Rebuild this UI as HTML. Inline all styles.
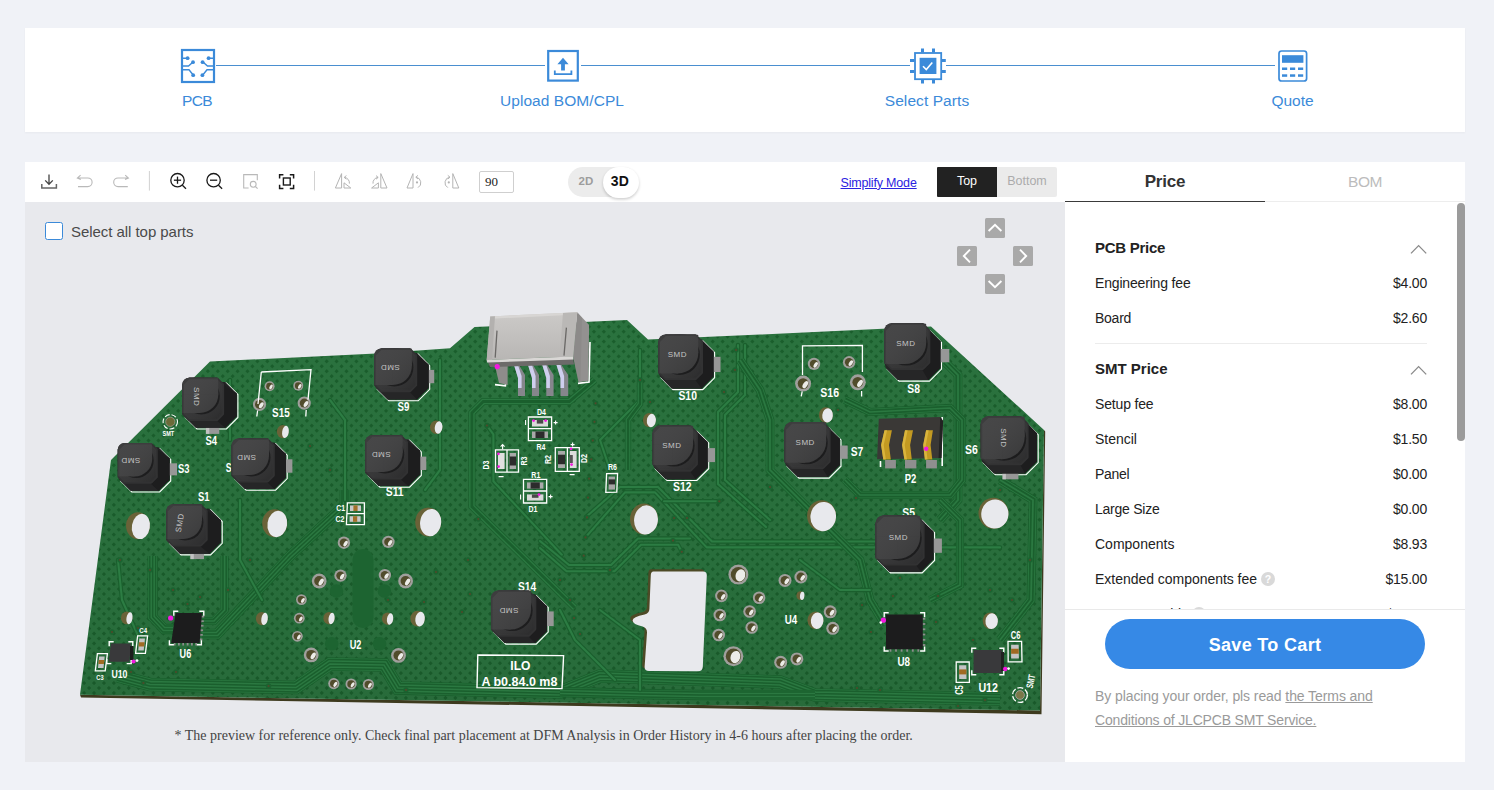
<!DOCTYPE html>
<html lang="en"><head><meta charset="utf-8"><title>SMT Assembly - Select Parts</title>
<style>
*{box-sizing:border-box;margin:0;padding:0}
html,body{width:1494px;height:790px;overflow:hidden}
body{background:#f0f2f7;font-family:"Liberation Sans",sans-serif;position:relative;color:#222}
.abs{position:absolute}
#steps{position:absolute;left:25px;top:28px;width:1440px;height:104px;background:#fff;box-shadow:0 1px 2px rgba(0,0,0,.04)}
.sline{position:absolute;height:2px;background:#4a8fd0;top:64px}
.slabel{position:absolute;top:91.5px;width:300px;text-align:center;font-size:15.5px;line-height:18px;color:#3b8ad9;white-space:nowrap}
#toolbar{position:absolute;left:25px;top:162px;width:1040px;height:40px;background:#fff}
#viewer{position:absolute;left:25px;top:202px;width:1040px;height:560px;background:#e8e9ed;overflow:hidden}
#panel{position:absolute;left:1065px;top:162px;width:400px;height:600px;background:#fff;overflow:hidden}
.tab{position:absolute;top:0;height:40px;width:200px;text-align:center;line-height:40px;white-space:nowrap}
.row{position:absolute;left:30px;width:332px;height:20px;line-height:20px;font-size:14px;color:#222;white-space:nowrap}
.row b{font-size:15px;color:#222}
.row .p{position:absolute;right:0;top:0;letter-spacing:-0.2px}
.chev{position:absolute;right:0;top:5px}
</style></head>
<body>
<div id="steps"></div>
<div class="sline" style="left:216px;width:329px;top:64.5px;height:1.5px"></div>
<div class="sline" style="left:581px;width:329px;top:64.5px;height:1.5px"></div>
<div class="sline" style="left:946px;width:329px;top:64.5px;height:1.5px"></div>
<svg class="abs" style="left:0;top:0" width="1494" height="140" viewBox="0 0 1494 140"><rect x="182" y="50" width="32" height="32" fill="#fff" stroke="#3b8ad9" stroke-width="2.2"/><g stroke="#3b8ad9" stroke-width="1.4" fill="none"><path d="M183 58.3h4.5M213 58.3h-4.5M183 66h5.5l4-3.6M213 66h-5.5l-4-3.6M183 69.8h6l4 5M213 69.8h-6l-4 5"/></g><circle cx="187.6" cy="58.2" r="1.9" fill="#3b8ad9"/><circle cx="208.6" cy="58.2" r="1.9" fill="#3b8ad9"/><circle cx="193" cy="62.2" r="1.9" fill="#3b8ad9"/><circle cx="202.6" cy="62.2" r="1.9" fill="#3b8ad9"/><circle cx="193.2" cy="75.2" r="1.9" fill="#3b8ad9"/><circle cx="202.4" cy="75.2" r="1.9" fill="#3b8ad9"/><rect x="548.2" y="51" width="29.6" height="29.6" fill="#fff" stroke="#3b8ad9" stroke-width="2.2"/><path d="M563 57.8l5.6 6.4h-3.7v6.4h-3.8v-6.4h-3.7z" fill="#3b8ad9"/><path d="M554.8 70.5v3.6h16.6v-3.6" fill="none" stroke="#3b8ad9" stroke-width="1.8"/><rect x="915" y="53" width="26.2" height="26.2" fill="#fff" stroke="#3b8ad9" stroke-width="1.8"/><rect x="919.6" y="57.8" width="16.8" height="16.2" fill="#3b8ad9"/><path d="M923 66.2l3.3 3.4 6-7" fill="none" stroke="#fff" stroke-width="1.6"/><path d="M921 48.4h3v4h-3zM921 79.8h3v3.6h-3zM932 48.4h3v4h-3zM932 79.8h3v3.6h-3zM910 59h4.4v3h-4.4zM941.6 59h4.2v3h-4.2zM910 70h4.4v3h-4.4zM941.6 70h4.2v3h-4.2z" fill="#3b8ad9"/><rect x="1279" y="51" width="27.6" height="30" rx="2.6" fill="#fff" stroke="#3b8ad9" stroke-width="1.7"/><rect x="1282" y="55.2" width="21.4" height="7.6" fill="#3b8ad9"/><rect x="1282" y="67.5" width="5.2" height="2.5" fill="#3b8ad9"/><rect x="1290" y="67.5" width="5.2" height="2.5" fill="#3b8ad9"/><rect x="1298" y="67.5" width="5.2" height="2.5" fill="#3b8ad9"/><rect x="1282" y="74.3" width="5.2" height="2.5" fill="#3b8ad9"/><rect x="1290" y="74.3" width="5.2" height="2.5" fill="#3b8ad9"/><rect x="1298" y="74.3" width="5.2" height="2.5" fill="#3b8ad9"/></svg>
<div class="slabel" style="left:47px;letter-spacing:-0.7px">PCB</div>
<div class="slabel" style="left:412px;letter-spacing:0.05px">Upload BOM/CPL</div>
<div class="slabel" style="left:777px;letter-spacing:0.08px">Select Parts</div>
<div class="slabel" style="left:1142.5px;letter-spacing:-0.06px">Quote</div>
<div id="toolbar"></div>
<svg class="abs" style="left:0;top:162px" width="1065" height="40" viewBox="0 162 1065 40" fill="none"><path d="M49 174.6v9.6M45.2 180.4l3.8 3.9 3.8-3.9" stroke="#444" stroke-width="1.3"/><path d="M41.8 184v4h14.6v-4" stroke="#666" stroke-width="1.5"/><path d="M80.6 175.2l-3.2 2.8 3.4 1.4M77.6 178h10.2a4.3 4.3 0 0 1 0 8.6h-9.8" stroke="#b9b9b9" stroke-width="1.1"/><path d="M125.2 175.2l3.2 2.8-3.4 1.4M128.2 178h-10.2a4.3 4.3 0 0 0 0 8.6h9.8" stroke="#b9b9b9" stroke-width="1.1"/><path d="M149.4 171v19.6M314.5 171v19.6" stroke="#d2d2d2" stroke-width="1"/><circle cx="177.5" cy="180.2" r="6.7" stroke="#1a1a1a" stroke-width="1.3"/><path d="M182.4 185.3l3.6 3.4" stroke="#1a1a1a" stroke-width="1.3"/><path d="M173.9 180.2h7.2" stroke="#1a1a1a" stroke-width="1.3"/><path d="M177.5 176.6v7.2" stroke="#1a1a1a" stroke-width="1.3"/><circle cx="213.6" cy="180.2" r="6.7" stroke="#1a1a1a" stroke-width="1.3"/><path d="M218.5 185.3l3.6 3.4" stroke="#1a1a1a" stroke-width="1.3"/><path d="M210.0 180.2h7.2" stroke="#1a1a1a" stroke-width="1.3"/><path d="M248.6 188h-4.9v-13.4h13.6v5.6" stroke="#b9b9b9" stroke-width="1.1"/><circle cx="253.2" cy="184.3" r="2.9" stroke="#b9b9b9" stroke-width="1.1"/><path d="M255.4 186.5l2.2 2.2" stroke="#b9b9b9" stroke-width="1.1"/><path d="M279.6 178.4v-3.6h3.8M289.8 174.8h3.8v3.6M293.6 184.8v3.6h-3.8M283.4 188.4h-3.8v-3.6" stroke="#1a1a1a" stroke-width="1.5"/><rect x="283.4" y="178" width="6.8" height="7" stroke="#1a1a1a" stroke-width="1.4"/><path d="M341.6 173.6v14.4h-6.2zM344 188v-5.2l6.8 5.2z" stroke="#b4b4b4" stroke-width="1"/><path d="M349.4 183.6a5.6 5.6 0 0 0-5-6.2M346.4 175.6l-2.2 1.8 2.2 1.8" stroke="#b4b4b4" stroke-width="1"/><path d="M380.8 173.6v14.4h6.2zM378.4 188v-5.2l-6.8 5.2z" stroke="#b4b4b4" stroke-width="1"/><path d="M373 183.6a5.6 5.6 0 0 1 5-6.2M376 175.6l2.2 1.8-2.2 1.8" stroke="#b4b4b4" stroke-width="1"/><path d="M413 173.6v14.4h-6zM416 177.2a5.6 5.6 0 0 1 2 10.4M418 175.4l-2.2 1.8 2.2 1.8" stroke="#b4b4b4" stroke-width="1"/><circle cx="417" cy="182.4" r="1.1" fill="#b4b4b4"/><path d="M452.8 173.6v14.4h6zM449.8 177.2a5.6 5.6 0 0 0-2 10.4M447.8 175.4l2.2 1.8-2.2 1.8" stroke="#b4b4b4" stroke-width="1"/><circle cx="448.8" cy="182.4" r="1.1" fill="#b4b4b4"/></svg>
<div class="abs" style="left:479px;top:171px;width:35px;height:22px;border:1px solid #cfcfcf;border-radius:2px;background:#fff;font-family:'Liberation Serif',serif;font-size:13px;line-height:19px;padding-left:5px;color:#222">90</div>
<div class="abs" style="left:568px;top:167px;width:70px;height:30px;border-radius:15px;background:#ececec"></div>
<div class="abs" style="left:603px;top:166.5px;width:35.5px;height:31px;border-radius:15.5px;background:#fff;box-shadow:0 1.5px 3px rgba(0,0,0,.2)"></div>
<div class="abs" style="left:568px;top:174px;width:36px;text-align:center;font-size:11.5px;line-height:15px;font-weight:bold;color:#9d9d9d;letter-spacing:.2px">2D</div>
<div class="abs" style="left:602px;top:172.8px;width:36px;text-align:center;font-size:14px;line-height:17px;font-weight:bold;color:#111;letter-spacing:.4px">3D</div>
<div class="abs" style="left:840.5px;top:174.5px;font-size:12.5px;line-height:16px;color:#2a22e0;text-decoration:underline;white-space:nowrap;letter-spacing:-0.18px">Simplify Mode</div>
<div class="abs" style="left:937px;top:167.2px;width:60px;height:29.5px;background:#222;color:#fff;font-size:12.5px;line-height:29px;text-align:center;border-radius:1px 0 0 1px">Top</div>
<div class="abs" style="left:997px;top:167.2px;width:60px;height:29.5px;background:#ebebeb;color:#ababab;font-size:12.5px;line-height:29px;text-align:center;border-radius:0 2px 2px 0">Bottom</div>
<div id="viewer">
<svg class="abs" style="left:0;top:0" width="1040" height="560" viewBox="25 202 1040 560"><defs><pattern id="dots" width="7" height="7" patternUnits="userSpaceOnUse" patternTransform="rotate(45)"><rect width="7" height="7" fill="#2a723e"/><rect x="2" y="2" width="3" height="3" fill="#1a5e2c"/></pattern><linearGradient id="gtop" gradientUnits="objectBoundingBox" x1="0" y1="0" x2="1" y2="1"><stop offset="0" stop-color="#424243"/><stop offset=".7" stop-color="#3a3a3b"/><stop offset="1" stop-color="#323233"/></linearGradient><linearGradient id="gsh" x1="0" y1="0" x2="1" y2="1"><stop offset="0" stop-color="#fff" stop-opacity=".05"/><stop offset="1" stop-color="#000" stop-opacity=".12"/></linearGradient><linearGradient id="gconn" x1="0" y1="0" x2="0" y2="1"><stop offset="0" stop-color="#cccac8"/><stop offset="1" stop-color="#b8b6b4"/></linearGradient><linearGradient id="gboard" x1="0" y1="0" x2="0" y2="1"><stop offset="0" stop-color="#000" stop-opacity="0"/><stop offset="1" stop-color="#000" stop-opacity=".06"/></linearGradient></defs><polygon points="80,694.8 1040,710.5 1044,430 1045.2,431.5 1041.5,714.2 81,697.4" fill="#3d3a1e"/><polygon points="210,361.5 376,353.5 450,348.3 474.5,327 589,321.8 627,320 648,339.5 760,334.6 888,328.6 931,326.5 1044,430 1040,710.5 80,694.8 111,460" fill="url(#dots)"/><polygon points="210,361.5 376,353.5 450,348.3 474.5,327 589,321.8 627,320 648,339.5 760,334.6 888,328.6 931,326.5 1044,430 1040,710.5 80,694.8 111,460" fill="url(#gboard)"/><polyline points="118,676 150,684.5 296,687.5 330,664 384,665 398,688 560,692 600,676 780,682 815,695 1000,699" fill="none" stroke="#1a5f2d" stroke-width="13.5" stroke-linejoin="miter"/><polyline points="118,676 150,684.5 296,687.5 330,664 384,665 398,688 560,692 600,676 780,682 815,695 1000,699" fill="none" stroke="#2b7841" stroke-width="11.9" stroke-linejoin="miter"/><polyline points="118,676 150,684.5 296,687.5 330,664 384,665 398,688 560,692 600,676 780,682 815,695 1000,699" fill="none" stroke="#1a5f2d" stroke-width="10.4" stroke-linejoin="miter"/><polyline points="118,676 150,684.5 296,687.5 330,664 384,665 398,688 560,692 600,676 780,682 815,695 1000,699" fill="none" stroke="#2b7841" stroke-width="7.4" stroke-linejoin="miter"/><polyline points="118,676 150,684.5 296,687.5 330,664 384,665 398,688 560,692 600,676 780,682 815,695 1000,699" fill="none" stroke="#1a5f2d" stroke-width="4.5" stroke-linejoin="miter"/><polyline points="118,676 150,684.5 296,687.5 330,664 384,665 398,688 560,692 600,676 780,682 815,695 1000,699" fill="none" stroke="#2b7841" stroke-width="1.5" stroke-linejoin="miter"/><polyline points="560,692 640,694 700,695 815,695" fill="none" stroke="#1a5f2d" stroke-width="10.3" stroke-linejoin="miter"/><polyline points="560,692 640,694 700,695 815,695" fill="none" stroke="#2b7841" stroke-width="8.7" stroke-linejoin="miter"/><polyline points="560,692 640,694 700,695 815,695" fill="none" stroke="#1a5f2d" stroke-width="7.3" stroke-linejoin="miter"/><polyline points="560,692 640,694 700,695 815,695" fill="none" stroke="#2b7841" stroke-width="4.4" stroke-linejoin="miter"/><polyline points="560,692 640,694 700,695 815,695" fill="none" stroke="#1a5f2d" stroke-width="1.5" stroke-linejoin="miter"/><polyline points="152.7,556 152.7,617 164,629 173,629" fill="none" stroke="#1a5f2d" stroke-width="10.3" stroke-linejoin="miter"/><polyline points="152.7,556 152.7,617 164,629 173,629" fill="none" stroke="#2b7841" stroke-width="8.7" stroke-linejoin="miter"/><polyline points="152.7,556 152.7,617 164,629 173,629" fill="none" stroke="#1a5f2d" stroke-width="7.3" stroke-linejoin="miter"/><polyline points="152.7,556 152.7,617 164,629 173,629" fill="none" stroke="#2b7841" stroke-width="4.4" stroke-linejoin="miter"/><polyline points="152.7,556 152.7,617 164,629 173,629" fill="none" stroke="#1a5f2d" stroke-width="1.5" stroke-linejoin="miter"/><polyline points="224.6,556 224.6,610 214,621 202,621" fill="none" stroke="#1a5f2d" stroke-width="8.1" stroke-linejoin="miter"/><polyline points="224.6,556 224.6,610 214,621 202,621" fill="none" stroke="#2b7841" stroke-width="6.5" stroke-linejoin="miter"/><polyline points="224.6,556 224.6,610 214,621 202,621" fill="none" stroke="#1a5f2d" stroke-width="4.9" stroke-linejoin="miter"/><polyline points="224.6,556 224.6,610 214,621 202,621" fill="none" stroke="#2b7841" stroke-width="1.6" stroke-linejoin="miter"/><polyline points="202,634 217,634 290,556 345,505 345,490" fill="none" stroke="#1a5f2d" stroke-width="10.7" stroke-linejoin="miter"/><polyline points="202,634 217,634 290,556 345,505 345,490" fill="none" stroke="#2b7841" stroke-width="9.1" stroke-linejoin="miter"/><polyline points="202,634 217,634 290,556 345,505 345,490" fill="none" stroke="#1a5f2d" stroke-width="7.6" stroke-linejoin="miter"/><polyline points="202,634 217,634 290,556 345,505 345,490" fill="none" stroke="#2b7841" stroke-width="4.5" stroke-linejoin="miter"/><polyline points="202,634 217,634 290,556 345,505 345,490" fill="none" stroke="#1a5f2d" stroke-width="1.5" stroke-linejoin="miter"/><polyline points="594.7,380 569.4,401.5 483.3,401.5 471.9,412.9 471.9,506.6 541.5,575 575,608" fill="none" stroke="#1a5f2d" stroke-width="7.1" stroke-linejoin="miter"/><polyline points="594.7,380 569.4,401.5 483.3,401.5 471.9,412.9 471.9,506.6 541.5,575 575,608" fill="none" stroke="#2b7841" stroke-width="5.5" stroke-linejoin="miter"/><polyline points="594.7,380 569.4,401.5 483.3,401.5 471.9,412.9 471.9,506.6 541.5,575 575,608" fill="none" stroke="#1a5f2d" stroke-width="2.8" stroke-linejoin="miter"/><polyline points="487,425.6 493.4,434.4 493.4,481.3 561.8,554.7" fill="none" stroke="#1a5f2d" stroke-width="4.4" stroke-linejoin="round" stroke-linecap="round"/><polyline points="487,425.6 493.4,434.4 493.4,481.3 561.8,554.7" fill="none" stroke="#2c7c43" stroke-width="2.1" stroke-linejoin="round" stroke-linecap="round"/><polyline points="540,548 566.6,571.3 614.5,571.3 641,544.7 678,544.7 681.8,551.8" fill="none" stroke="#1a5f2d" stroke-width="4.4" stroke-linejoin="round" stroke-linecap="round"/><polyline points="540,548 566.6,571.3 614.5,571.3 641,544.7 678,544.7 681.8,551.8" fill="none" stroke="#2c7c43" stroke-width="2.1" stroke-linejoin="round" stroke-linecap="round"/><polyline points="540,541 569,565 611,565 638,538.5 690,538.5" fill="none" stroke="#1a5f2d" stroke-width="4.4" stroke-linejoin="round" stroke-linecap="round"/><polyline points="540,541 569,565 611,565 638,538.5 690,538.5" fill="none" stroke="#2c7c43" stroke-width="2.1" stroke-linejoin="round" stroke-linecap="round"/><polyline points="586,536.7 625,492.4 655,492.4 706.7,547.4 1000,547.4" fill="none" stroke="#1a5f2d" stroke-width="4.4" stroke-linejoin="round" stroke-linecap="round"/><polyline points="586,536.7 625,492.4 655,492.4 706.7,547.4 1000,547.4" fill="none" stroke="#2c7c43" stroke-width="2.1" stroke-linejoin="round" stroke-linecap="round"/><polyline points="586,517 620,487 658,487 712,541.5 880,541.5" fill="none" stroke="#1a5f2d" stroke-width="4.4" stroke-linejoin="round" stroke-linecap="round"/><polyline points="586,517 620,487 658,487 712,541.5 880,541.5" fill="none" stroke="#2c7c43" stroke-width="2.1" stroke-linejoin="round" stroke-linecap="round"/><polyline points="719,501.3 664,501.3" fill="none" stroke="#1a5f2d" stroke-width="4.4" stroke-linejoin="round" stroke-linecap="round"/><polyline points="719,501.3 664,501.3" fill="none" stroke="#2c7c43" stroke-width="2.1" stroke-linejoin="round" stroke-linecap="round"/><polyline points="610,470 600,440 640,400 640,350" fill="none" stroke="#1a5f2d" stroke-width="4.4" stroke-linejoin="round" stroke-linecap="round"/><polyline points="610,470 600,440 640,400 640,350" fill="none" stroke="#2c7c43" stroke-width="2.1" stroke-linejoin="round" stroke-linecap="round"/><polyline points="745,345 745,395 725,415 725,480 770,520" fill="none" stroke="#1a5f2d" stroke-width="4.4" stroke-linejoin="round" stroke-linecap="round"/><polyline points="745,345 745,395 725,415 725,480 770,520" fill="none" stroke="#2c7c43" stroke-width="2.1" stroke-linejoin="round" stroke-linecap="round"/><polyline points="738,345 738,392 718,412 718,484 766,527" fill="none" stroke="#1a5f2d" stroke-width="4.4" stroke-linejoin="round" stroke-linecap="round"/><polyline points="738,345 738,392 718,412 718,484 766,527" fill="none" stroke="#2c7c43" stroke-width="2.1" stroke-linejoin="round" stroke-linecap="round"/><polyline points="945,362 958,375 958,500 940,520" fill="none" stroke="#1a5f2d" stroke-width="8.7" stroke-linejoin="miter"/><polyline points="945,362 958,375 958,500 940,520" fill="none" stroke="#2b7841" stroke-width="7.1" stroke-linejoin="miter"/><polyline points="945,362 958,375 958,500 940,520" fill="none" stroke="#1a5f2d" stroke-width="5.3" stroke-linejoin="miter"/><polyline points="945,362 958,375 958,500 940,520" fill="none" stroke="#2b7841" stroke-width="1.8" stroke-linejoin="miter"/><polyline points="1000,480 1033,500 1031,600 1000,640" fill="none" stroke="#1a5f2d" stroke-width="8.7" stroke-linejoin="miter"/><polyline points="1000,480 1033,500 1031,600 1000,640" fill="none" stroke="#2b7841" stroke-width="7.1" stroke-linejoin="miter"/><polyline points="1000,480 1033,500 1031,600 1000,640" fill="none" stroke="#1a5f2d" stroke-width="5.3" stroke-linejoin="miter"/><polyline points="1000,480 1033,500 1031,600 1000,640" fill="none" stroke="#2b7841" stroke-width="1.8" stroke-linejoin="miter"/><polyline points="845,400 870,412 950,408 962,420 962,480 950,495 860,495 845,480" fill="none" stroke="#1a5f2d" stroke-width="8.1" stroke-linejoin="miter"/><polyline points="845,400 870,412 950,408 962,420 962,480 950,495 860,495 845,480" fill="none" stroke="#2b7841" stroke-width="6.5" stroke-linejoin="miter"/><polyline points="845,400 870,412 950,408 962,420 962,480 950,495 860,495 845,480" fill="none" stroke="#1a5f2d" stroke-width="4.9" stroke-linejoin="miter"/><polyline points="845,400 870,412 950,408 962,420 962,480 950,495 860,495 845,480" fill="none" stroke="#2b7841" stroke-width="1.6" stroke-linejoin="miter"/><polyline points="740,360 760,390 770,420 770,470 800,500 860,560 870,600 885,625" fill="none" stroke="#1a5f2d" stroke-width="8.7" stroke-linejoin="miter"/><polyline points="740,360 760,390 770,420 770,470 800,500 860,560 870,600 885,625" fill="none" stroke="#2b7841" stroke-width="7.1" stroke-linejoin="miter"/><polyline points="740,360 760,390 770,420 770,470 800,500 860,560 870,600 885,625" fill="none" stroke="#1a5f2d" stroke-width="5.3" stroke-linejoin="miter"/><polyline points="740,360 760,390 770,420 770,470 800,500 860,560 870,600 885,625" fill="none" stroke="#2b7841" stroke-width="1.8" stroke-linejoin="miter"/><polyline points="930,600 960,585 960,520 940,500" fill="none" stroke="#1a5f2d" stroke-width="8.1" stroke-linejoin="miter"/><polyline points="930,600 960,585 960,520 940,500" fill="none" stroke="#2b7841" stroke-width="6.5" stroke-linejoin="miter"/><polyline points="930,600 960,585 960,520 940,500" fill="none" stroke="#1a5f2d" stroke-width="4.9" stroke-linejoin="miter"/><polyline points="930,600 960,585 960,520 940,500" fill="none" stroke="#2b7841" stroke-width="1.6" stroke-linejoin="miter"/><polyline points="640,380 640,404 628,420 628,470" fill="none" stroke="#1a5f2d" stroke-width="6.3" stroke-linejoin="miter"/><polyline points="640,380 640,404 628,420 628,470" fill="none" stroke="#2b7841" stroke-width="4.7" stroke-linejoin="miter"/><polyline points="640,380 640,404 628,420 628,470" fill="none" stroke="#1a5f2d" stroke-width="2.3" stroke-linejoin="miter"/><polyline points="230,380 230,440" fill="none" stroke="#1a5f2d" stroke-width="4.4" stroke-linejoin="round" stroke-linecap="round"/><polyline points="230,380 230,440" fill="none" stroke="#2c7c43" stroke-width="2.1" stroke-linejoin="round" stroke-linecap="round"/><polyline points="118,560 122,600 140,640" fill="none" stroke="#1a5f2d" stroke-width="4.4" stroke-linejoin="round" stroke-linecap="round"/><polyline points="118,560 122,600 140,640" fill="none" stroke="#2c7c43" stroke-width="2.1" stroke-linejoin="round" stroke-linecap="round"/><polyline points="240,500 240,560 262,600" fill="none" stroke="#1a5f2d" stroke-width="4.4" stroke-linejoin="round" stroke-linecap="round"/><polyline points="240,500 240,560 262,600" fill="none" stroke="#2c7c43" stroke-width="2.1" stroke-linejoin="round" stroke-linecap="round"/><polyline points="330,400 345,420 345,500" fill="none" stroke="#1a5f2d" stroke-width="4.4" stroke-linejoin="round" stroke-linecap="round"/><polyline points="330,400 345,420 345,500" fill="none" stroke="#2c7c43" stroke-width="2.1" stroke-linejoin="round" stroke-linecap="round"/><polyline points="440,360 440,470 425,490" fill="none" stroke="#1a5f2d" stroke-width="4.4" stroke-linejoin="round" stroke-linecap="round"/><polyline points="440,360 440,470 425,490" fill="none" stroke="#2c7c43" stroke-width="2.1" stroke-linejoin="round" stroke-linecap="round"/><polyline points="600,610 640,640 640,690" fill="none" stroke="#1a5f2d" stroke-width="4.4" stroke-linejoin="round" stroke-linecap="round"/><polyline points="600,610 640,640 640,690" fill="none" stroke="#2c7c43" stroke-width="2.1" stroke-linejoin="round" stroke-linecap="round"/><polyline points="560,610 575,640 615,680" fill="none" stroke="#1a5f2d" stroke-width="4.4" stroke-linejoin="round" stroke-linecap="round"/><polyline points="560,610 575,640 615,680" fill="none" stroke="#2c7c43" stroke-width="2.1" stroke-linejoin="round" stroke-linecap="round"/><polyline points="800,560 840,590 870,590" fill="none" stroke="#1a5f2d" stroke-width="4.4" stroke-linejoin="round" stroke-linecap="round"/><polyline points="800,560 840,590 870,590" fill="none" stroke="#2c7c43" stroke-width="2.1" stroke-linejoin="round" stroke-linecap="round"/><circle cx="595.6" cy="403.3" r="2.7" fill="#1c6230"/><circle cx="595.6" cy="403.3" r="1.1" fill="#4e4a2a"/><circle cx="594.5" cy="421.8" r="2.7" fill="#1c6230"/><circle cx="594.5" cy="421.8" r="1.1" fill="#4e4a2a"/><circle cx="592.8" cy="440.6" r="2.7" fill="#1c6230"/><circle cx="592.8" cy="440.6" r="1.1" fill="#4e4a2a"/><circle cx="591.3" cy="459.3" r="2.7" fill="#1c6230"/><circle cx="591.3" cy="459.3" r="1.1" fill="#4e4a2a"/><circle cx="589.1" cy="478.7" r="2.7" fill="#1c6230"/><circle cx="589.1" cy="478.7" r="1.1" fill="#4e4a2a"/><circle cx="588" cy="497.6" r="2.7" fill="#1c6230"/><circle cx="588" cy="497.6" r="1.1" fill="#4e4a2a"/><circle cx="587" cy="517.4" r="2.7" fill="#1c6230"/><circle cx="587" cy="517.4" r="1.1" fill="#4e4a2a"/><circle cx="585.5" cy="537.4" r="2.7" fill="#1c6230"/><circle cx="585.5" cy="537.4" r="1.1" fill="#4e4a2a"/><circle cx="583.7" cy="555.7" r="2.7" fill="#1c6230"/><circle cx="583.7" cy="555.7" r="1.1" fill="#4e4a2a"/><circle cx="486.9" cy="425.5" r="2.7" fill="#1c6230"/><circle cx="486.9" cy="425.5" r="1.1" fill="#4e4a2a"/><circle cx="478.3" cy="519.1" r="2.7" fill="#1c6230"/><circle cx="478.3" cy="519.1" r="1.1" fill="#4e4a2a"/><circle cx="719.3" cy="501.3" r="2.7" fill="#1c6230"/><circle cx="719.3" cy="501.3" r="1.1" fill="#4e4a2a"/><circle cx="674.1" cy="518" r="2.7" fill="#1c6230"/><circle cx="674.1" cy="518" r="1.1" fill="#4e4a2a"/><circle cx="687" cy="518" r="2.7" fill="#1c6230"/><circle cx="687" cy="518" r="1.1" fill="#4e4a2a"/><circle cx="673" cy="540.6" r="2.7" fill="#1c6230"/><circle cx="673" cy="540.6" r="1.1" fill="#4e4a2a"/><circle cx="681.8" cy="551.8" r="2.7" fill="#1c6230"/><circle cx="681.8" cy="551.8" r="1.1" fill="#4e4a2a"/><circle cx="173" cy="590" r="2.7" fill="#1c6230"/><circle cx="173" cy="590" r="1.1" fill="#4e4a2a"/><circle cx="187.5" cy="604" r="2.7" fill="#1c6230"/><circle cx="187.5" cy="604" r="1.1" fill="#4e4a2a"/><circle cx="200" cy="597" r="2.7" fill="#1c6230"/><circle cx="200" cy="597" r="1.1" fill="#4e4a2a"/><circle cx="112" cy="632" r="2.7" fill="#1c6230"/><circle cx="112" cy="632" r="1.1" fill="#4e4a2a"/><circle cx="138" cy="628" r="2.7" fill="#1c6230"/><circle cx="138" cy="628" r="1.1" fill="#4e4a2a"/><circle cx="131" cy="672" r="2.7" fill="#1c6230"/><circle cx="131" cy="672" r="1.1" fill="#4e4a2a"/><circle cx="176" cy="672" r="2.7" fill="#1c6230"/><circle cx="176" cy="672" r="1.1" fill="#4e4a2a"/><circle cx="143.4" cy="683" r="2.7" fill="#1c6230"/><circle cx="143.4" cy="683" r="1.1" fill="#4e4a2a"/><circle cx="268.6" cy="686" r="2.7" fill="#1c6230"/><circle cx="268.6" cy="686" r="1.1" fill="#4e4a2a"/><circle cx="388" cy="600" r="2.7" fill="#1c6230"/><circle cx="388" cy="600" r="1.1" fill="#4e4a2a"/><circle cx="406" cy="690" r="2.7" fill="#1c6230"/><circle cx="406" cy="690" r="1.1" fill="#4e4a2a"/><circle cx="424" cy="602" r="2.7" fill="#1c6230"/><circle cx="424" cy="602" r="1.1" fill="#4e4a2a"/><circle cx="436" cy="572" r="2.7" fill="#1c6230"/><circle cx="436" cy="572" r="1.1" fill="#4e4a2a"/><circle cx="468" cy="560" r="2.7" fill="#1c6230"/><circle cx="468" cy="560" r="1.1" fill="#4e4a2a"/><circle cx="470" cy="594" r="2.7" fill="#1c6230"/><circle cx="470" cy="594" r="1.1" fill="#4e4a2a"/><circle cx="462" cy="612" r="2.7" fill="#1c6230"/><circle cx="462" cy="612" r="1.1" fill="#4e4a2a"/><circle cx="560" cy="580" r="2.7" fill="#1c6230"/><circle cx="560" cy="580" r="1.1" fill="#4e4a2a"/><circle cx="570" cy="600" r="2.7" fill="#1c6230"/><circle cx="570" cy="600" r="1.1" fill="#4e4a2a"/><circle cx="574" cy="618" r="2.7" fill="#1c6230"/><circle cx="574" cy="618" r="1.1" fill="#4e4a2a"/><circle cx="580" cy="634" r="2.7" fill="#1c6230"/><circle cx="580" cy="634" r="1.1" fill="#4e4a2a"/><circle cx="610" cy="570" r="2.7" fill="#1c6230"/><circle cx="610" cy="570" r="1.1" fill="#4e4a2a"/><circle cx="682" cy="598" r="2.7" fill="#1c6230"/><circle cx="682" cy="598" r="1.1" fill="#4e4a2a"/><circle cx="736" cy="350" r="2.7" fill="#1c6230"/><circle cx="736" cy="350" r="1.1" fill="#4e4a2a"/><circle cx="735" cy="370" r="2.7" fill="#1c6230"/><circle cx="735" cy="370" r="1.1" fill="#4e4a2a"/><circle cx="724" cy="392" r="2.7" fill="#1c6230"/><circle cx="724" cy="392" r="1.1" fill="#4e4a2a"/><circle cx="838" cy="410" r="2.7" fill="#1c6230"/><circle cx="838" cy="410" r="1.1" fill="#4e4a2a"/><circle cx="856" cy="498" r="2.7" fill="#1c6230"/><circle cx="856" cy="498" r="1.1" fill="#4e4a2a"/><circle cx="770" cy="487" r="2.7" fill="#1c6230"/><circle cx="770" cy="487" r="1.1" fill="#4e4a2a"/><circle cx="862" cy="605" r="2.7" fill="#1c6230"/><circle cx="862" cy="605" r="1.1" fill="#4e4a2a"/><circle cx="871" cy="632" r="2.7" fill="#1c6230"/><circle cx="871" cy="632" r="1.1" fill="#4e4a2a"/><circle cx="893" cy="596" r="2.7" fill="#1c6230"/><circle cx="893" cy="596" r="1.1" fill="#4e4a2a"/><circle cx="900" cy="578" r="2.7" fill="#1c6230"/><circle cx="900" cy="578" r="1.1" fill="#4e4a2a"/><circle cx="938" cy="596" r="2.7" fill="#1c6230"/><circle cx="938" cy="596" r="1.1" fill="#4e4a2a"/><circle cx="936" cy="622" r="2.7" fill="#1c6230"/><circle cx="936" cy="622" r="1.1" fill="#4e4a2a"/><circle cx="990" cy="590" r="2.7" fill="#1c6230"/><circle cx="990" cy="590" r="1.1" fill="#4e4a2a"/><circle cx="973" cy="640" r="2.7" fill="#1c6230"/><circle cx="973" cy="640" r="1.1" fill="#4e4a2a"/><circle cx="985" cy="700" r="2.7" fill="#1c6230"/><circle cx="985" cy="700" r="1.1" fill="#4e4a2a"/><circle cx="958" cy="706" r="2.7" fill="#1c6230"/><circle cx="958" cy="706" r="1.1" fill="#4e4a2a"/><circle cx="857" cy="688" r="2.7" fill="#1c6230"/><circle cx="857" cy="688" r="1.1" fill="#4e4a2a"/><circle cx="880" cy="690" r="2.7" fill="#1c6230"/><circle cx="880" cy="690" r="1.1" fill="#4e4a2a"/><circle cx="1000" cy="490" r="2.7" fill="#1c6230"/><circle cx="1000" cy="490" r="1.1" fill="#4e4a2a"/><circle cx="1030" cy="560" r="2.7" fill="#1c6230"/><circle cx="1030" cy="560" r="1.1" fill="#4e4a2a"/><circle cx="1012" cy="600" r="2.7" fill="#1c6230"/><circle cx="1012" cy="600" r="1.1" fill="#4e4a2a"/><circle cx="640" cy="380" r="2.7" fill="#1c6230"/><circle cx="640" cy="380" r="1.1" fill="#4e4a2a"/><circle cx="650" cy="402" r="2.7" fill="#1c6230"/><circle cx="650" cy="402" r="1.1" fill="#4e4a2a"/><circle cx="330" cy="470" r="2.7" fill="#1c6230"/><circle cx="330" cy="470" r="1.1" fill="#4e4a2a"/><circle cx="310" cy="446" r="2.7" fill="#1c6230"/><circle cx="310" cy="446" r="1.1" fill="#4e4a2a"/><circle cx="250" cy="560" r="2.7" fill="#1c6230"/><circle cx="250" cy="560" r="1.1" fill="#4e4a2a"/><circle cx="228" cy="590" r="2.7" fill="#1c6230"/><circle cx="228" cy="590" r="1.1" fill="#4e4a2a"/><circle cx="150" cy="570" r="2.7" fill="#1c6230"/><circle cx="150" cy="570" r="1.1" fill="#4e4a2a"/><circle cx="120" cy="560" r="2.7" fill="#1c6230"/><circle cx="120" cy="560" r="1.1" fill="#4e4a2a"/><rect x="352.5" y="549" width="21" height="79" rx="10.5" fill="#1d6431"/><circle cx="336.5" cy="591" r="6.8" fill="#1d6431"/><circle cx="384.4" cy="591" r="6.8" fill="#1d6431"/><circle cx="331.7" cy="643.7" r="6.8" fill="#1d6431"/><circle cx="379.6" cy="643.7" r="6.8" fill="#1d6431"/><path d="M654 571.5Q651 571 650.8 575L649.4 609Q649.2 613.4 644.6 614.4Q632.6 616.6 632.6 620.6Q632.6 624.4 642.6 626.6Q647.2 628 647 632.6L644.6 667Q644.6 671 649 671L698 671.2Q702.4 671.2 702.8 667L706.8 575.5Q707 571.5 703 571.4Z" fill="#4d4a26" transform="translate(-2.4,-2.2)"/><path d="M654 571.5Q651 571 650.8 575L649.4 609Q649.2 613.4 644.6 614.4Q632.6 616.6 632.6 620.6Q632.6 624.4 642.6 626.6Q647.2 628 647 632.6L644.6 667Q644.6 671 649 671L698 671.2Q702.4 671.2 702.8 667L706.8 575.5Q707 571.5 703 571.4Z" fill="#e8e9ed"/><ellipse cx="138" cy="525.8" rx="12" ry="13.5" fill="#6a6238"/><ellipse cx="141" cy="526.5" rx="9" ry="12.7" fill="#e8e9ed" transform="rotate(9.6 141 525.8)"/><ellipse cx="274.7" cy="523.3" rx="12.5" ry="14" fill="#6a6238"/><ellipse cx="277.4" cy="524" rx="9.8" ry="13.2" fill="#e8e9ed" transform="rotate(8.7 277.4 523.3)"/><ellipse cx="428.2" cy="521.9" rx="13" ry="14.5" fill="#6a6238"/><ellipse cx="430.7" cy="522.6" rx="10.5" ry="13.6" fill="#e8e9ed" transform="rotate(7.8 430.7 521.9)"/><ellipse cx="644" cy="519.1" rx="14" ry="15.5" fill="#6a6238"/><ellipse cx="646.1" cy="519.9" rx="11.9" ry="14.6" fill="#e8e9ed" transform="rotate(6.6 646.1 519.1)"/><ellipse cx="821.6" cy="515.8" rx="14.5" ry="15.5" fill="#6a6238"/><ellipse cx="823.3" cy="516.6" rx="12.8" ry="14.6" fill="#e8e9ed" transform="rotate(5.5 823.3 515.8)"/><ellipse cx="993.5" cy="513.2" rx="15" ry="15.5" fill="#6a6238"/><ellipse cx="994.9" cy="514" rx="13.6" ry="14.6" fill="#e8e9ed" transform="rotate(4.5 994.9 513.2)"/><ellipse cx="282.8" cy="431.6" rx="6" ry="6.6" fill="#6a6238"/><ellipse cx="285.5" cy="431.9" rx="3.3" ry="6.2" fill="#e8e9ed" transform="rotate(8.7 285.5 431.6)"/><ellipse cx="436.2" cy="427.2" rx="6.2" ry="6.8" fill="#6a6238"/><ellipse cx="438.6" cy="427.5" rx="3.8" ry="6.4" fill="#e8e9ed" transform="rotate(7.8 438.6 427.2)"/><ellipse cx="649.4" cy="420.1" rx="6.5" ry="7.2" fill="#6a6238"/><ellipse cx="651.4" cy="420.5" rx="4.5" ry="6.7" fill="#e8e9ed" transform="rotate(6.5 651.4 420.1)"/><ellipse cx="825.9" cy="415" rx="7" ry="7.7" fill="#6a6238"/><ellipse cx="827.6" cy="415.4" rx="5.3" ry="7.2" fill="#e8e9ed" transform="rotate(5.5 827.6 415)"/><ellipse cx="126.7" cy="617.9" rx="5.8" ry="6.4" fill="#6a6238"/><ellipse cx="129.5" cy="618.2" rx="3" ry="6" fill="#e8e9ed" transform="rotate(8.8 129.5 617.9)"/><ellipse cx="261.8" cy="618.6" rx="6" ry="6.6" fill="#6a6238"/><ellipse cx="264.6" cy="618.9" rx="3.2" ry="6.2" fill="#e8e9ed" transform="rotate(8.8 264.6 618.6)"/><ellipse cx="329" cy="618.2" rx="5.6" ry="6.2" fill="#6a6238"/><ellipse cx="331.6" cy="618.5" rx="3" ry="5.8" fill="#e8e9ed" transform="rotate(8.4 331.6 618.2)"/><ellipse cx="387.6" cy="618.7" rx="5.6" ry="6.2" fill="#6a6238"/><ellipse cx="390.1" cy="619" rx="3.1" ry="5.8" fill="#e8e9ed" transform="rotate(8.1 390.1 618.7)"/><ellipse cx="417.6" cy="618.7" rx="7.2" ry="7.9" fill="#6a6238"/><ellipse cx="420.1" cy="619.1" rx="4.7" ry="7.4" fill="#e8e9ed" transform="rotate(7.9 420.1 618.7)"/><ellipse cx="815.5" cy="620.3" rx="8" ry="8.8" fill="#6a6238"/><ellipse cx="817.2" cy="620.7" rx="6.3" ry="8.3" fill="#e8e9ed" transform="rotate(5.6 817.2 620.3)"/><ellipse cx="800.4" cy="595.6" rx="4" ry="4.4" fill="#6a6238"/><ellipse cx="802.2" cy="595.8" rx="2.2" ry="4.1" fill="#e8e9ed" transform="rotate(5.7 802.2 595.6)"/><ellipse cx="990.3" cy="620.8" rx="7.6" ry="8.4" fill="#6a6238"/><ellipse cx="991.7" cy="621.2" rx="6.2" ry="7.9" fill="#e8e9ed" transform="rotate(4.5 991.7 620.8)"/><circle cx="343.9" cy="542.7" r="6.2" fill="#a09f9c"/><circle cx="343.9" cy="542.7" r="4.2" fill="#514c2b"/><ellipse cx="345.6" cy="543.6" rx="1.7" ry="3.1" fill="#ecece8" transform="rotate(32 345.6 543.6)"/><circle cx="388.4" cy="541.9" r="6.2" fill="#a09f9c"/><circle cx="388.4" cy="541.9" r="4.2" fill="#514c2b"/><ellipse cx="390.1" cy="542.8" rx="1.7" ry="3.1" fill="#ecece8" transform="rotate(32 390.1 542.8)"/><circle cx="340.5" cy="575.6" r="6.2" fill="#a09f9c"/><circle cx="340.5" cy="575.6" r="4.2" fill="#514c2b"/><ellipse cx="342.2" cy="576.5" rx="1.7" ry="3.1" fill="#ecece8" transform="rotate(32 342.2 576.5)"/><circle cx="384.9" cy="575.1" r="6.2" fill="#a09f9c"/><circle cx="384.9" cy="575.1" r="4.2" fill="#514c2b"/><ellipse cx="386.6" cy="576" rx="1.7" ry="3.1" fill="#ecece8" transform="rotate(32 386.6 576)"/><circle cx="319.2" cy="581" r="7.4" fill="#a09f9c"/><circle cx="319.2" cy="581" r="5" fill="#514c2b"/><ellipse cx="321.2" cy="582" rx="2" ry="3.7" fill="#ecece8" transform="rotate(32 321.2 582)"/><circle cx="405.6" cy="581" r="7.4" fill="#a09f9c"/><circle cx="405.6" cy="581" r="5" fill="#514c2b"/><ellipse cx="407.6" cy="582" rx="2" ry="3.7" fill="#ecece8" transform="rotate(32 407.6 582)"/><circle cx="301.4" cy="599.6" r="5.4" fill="#a09f9c"/><circle cx="301.4" cy="599.6" r="3.7" fill="#514c2b"/><ellipse cx="302.9" cy="600.4" rx="1.5" ry="2.7" fill="#ecece8" transform="rotate(32 302.9 600.4)"/><circle cx="299.3" cy="618.2" r="5.4" fill="#a09f9c"/><circle cx="299.3" cy="618.2" r="3.7" fill="#514c2b"/><ellipse cx="300.8" cy="619" rx="1.5" ry="2.7" fill="#ecece8" transform="rotate(32 300.8 619)"/><circle cx="297.4" cy="636.3" r="5.4" fill="#a09f9c"/><circle cx="297.4" cy="636.3" r="3.7" fill="#514c2b"/><ellipse cx="298.9" cy="637.1" rx="1.5" ry="2.7" fill="#ecece8" transform="rotate(32 298.9 637.1)"/><circle cx="311.2" cy="654.9" r="7.4" fill="#a09f9c"/><circle cx="311.2" cy="654.9" r="5" fill="#514c2b"/><ellipse cx="313.2" cy="655.9" rx="2" ry="3.7" fill="#ecece8" transform="rotate(32 313.2 655.9)"/><circle cx="398.5" cy="655.4" r="7.4" fill="#a09f9c"/><circle cx="398.5" cy="655.4" r="5" fill="#514c2b"/><ellipse cx="400.5" cy="656.4" rx="2" ry="3.7" fill="#ecece8" transform="rotate(32 400.5 656.4)"/><circle cx="333.8" cy="683.6" r="5.6" fill="#a09f9c"/><circle cx="333.8" cy="683.6" r="3.8" fill="#514c2b"/><ellipse cx="335.3" cy="684.4" rx="1.5" ry="2.8" fill="#ecece8" transform="rotate(32 335.3 684.4)"/><circle cx="351.1" cy="684" r="5.6" fill="#a09f9c"/><circle cx="351.1" cy="684" r="3.8" fill="#514c2b"/><ellipse cx="352.6" cy="684.8" rx="1.5" ry="2.8" fill="#ecece8" transform="rotate(32 352.6 684.8)"/><circle cx="368.4" cy="684.5" r="5.6" fill="#a09f9c"/><circle cx="368.4" cy="684.5" r="3.8" fill="#514c2b"/><ellipse cx="369.9" cy="685.3" rx="1.5" ry="2.8" fill="#ecece8" transform="rotate(32 369.9 685.3)"/><circle cx="738.4" cy="574.6" r="10" fill="#a09f9c"/><circle cx="738.4" cy="574.6" r="7.6" fill="#514c2b"/><ellipse cx="740.4" cy="575.4" rx="4.8" ry="6.2" fill="#ecece8" transform="rotate(18 740.4 575.4)"/><circle cx="733.4" cy="656.2" r="10" fill="#a09f9c"/><circle cx="733.4" cy="656.2" r="7.6" fill="#514c2b"/><ellipse cx="735.4" cy="657" rx="4.8" ry="6.2" fill="#ecece8" transform="rotate(18 735.4 657)"/><circle cx="721.4" cy="595.9" r="6.3" fill="#a09f9c"/><circle cx="721.4" cy="595.9" r="4.3" fill="#514c2b"/><ellipse cx="723.1" cy="596.8" rx="1.7" ry="3.1" fill="#ecece8" transform="rotate(32 723.1 596.8)"/><circle cx="719.8" cy="615" r="6.3" fill="#a09f9c"/><circle cx="719.8" cy="615" r="4.3" fill="#514c2b"/><ellipse cx="721.5" cy="615.9" rx="1.7" ry="3.1" fill="#ecece8" transform="rotate(32 721.5 615.9)"/><circle cx="718.7" cy="635" r="6.3" fill="#a09f9c"/><circle cx="718.7" cy="635" r="4.3" fill="#514c2b"/><ellipse cx="720.4" cy="635.9" rx="1.7" ry="3.1" fill="#ecece8" transform="rotate(32 720.4 635.9)"/><circle cx="759.1" cy="597.7" r="6.3" fill="#a09f9c"/><circle cx="759.1" cy="597.7" r="4.3" fill="#514c2b"/><ellipse cx="760.8" cy="598.6" rx="1.7" ry="3.1" fill="#ecece8" transform="rotate(32 760.8 598.6)"/><circle cx="749.6" cy="611.5" r="6.3" fill="#a09f9c"/><circle cx="749.6" cy="611.5" r="4.3" fill="#514c2b"/><ellipse cx="751.3" cy="612.4" rx="1.7" ry="3.1" fill="#ecece8" transform="rotate(32 751.3 612.4)"/><circle cx="751.7" cy="627.5" r="6.3" fill="#a09f9c"/><circle cx="751.7" cy="627.5" r="4.3" fill="#514c2b"/><ellipse cx="753.4" cy="628.4" rx="1.7" ry="3.1" fill="#ecece8" transform="rotate(32 753.4 628.4)"/><circle cx="785" cy="580.4" r="6.5" fill="#a09f9c"/><circle cx="785" cy="580.4" r="4.4" fill="#514c2b"/><ellipse cx="786.8" cy="581.3" rx="1.8" ry="3.2" fill="#ecece8" transform="rotate(32 786.8 581.3)"/><circle cx="800.9" cy="577" r="6.5" fill="#a09f9c"/><circle cx="800.9" cy="577" r="4.4" fill="#514c2b"/><ellipse cx="802.7" cy="577.9" rx="1.8" ry="3.2" fill="#ecece8" transform="rotate(32 802.7 577.9)"/><circle cx="830.2" cy="611.8" r="6.5" fill="#a09f9c"/><circle cx="830.2" cy="611.8" r="4.4" fill="#514c2b"/><ellipse cx="832" cy="612.7" rx="1.8" ry="3.2" fill="#ecece8" transform="rotate(32 832 612.7)"/><circle cx="832.8" cy="628.3" r="6.5" fill="#a09f9c"/><circle cx="832.8" cy="628.3" r="4.4" fill="#514c2b"/><ellipse cx="834.6" cy="629.2" rx="1.8" ry="3.2" fill="#ecece8" transform="rotate(32 834.6 629.2)"/><circle cx="780.7" cy="662.3" r="6.5" fill="#a09f9c"/><circle cx="780.7" cy="662.3" r="4.4" fill="#514c2b"/><ellipse cx="782.5" cy="663.2" rx="1.8" ry="3.2" fill="#ecece8" transform="rotate(32 782.5 663.2)"/><circle cx="796.9" cy="658.9" r="6.5" fill="#a09f9c"/><circle cx="796.9" cy="658.9" r="4.4" fill="#514c2b"/><ellipse cx="798.7" cy="659.8" rx="1.8" ry="3.2" fill="#ecece8" transform="rotate(32 798.7 659.8)"/><circle cx="269.6" cy="386.2" r="5" fill="#a09f9c"/><circle cx="269.6" cy="386.2" r="3.4" fill="#514c2b"/><ellipse cx="271" cy="386.9" rx="1.4" ry="2.5" fill="#ecece8" transform="rotate(32 271 386.9)"/><circle cx="298.3" cy="385.7" r="5" fill="#a09f9c"/><circle cx="298.3" cy="385.7" r="3.4" fill="#514c2b"/><ellipse cx="299.7" cy="386.4" rx="1.4" ry="2.5" fill="#ecece8" transform="rotate(32 299.7 386.4)"/><circle cx="259.5" cy="404.4" r="6.6" fill="#a09f9c"/><circle cx="259.5" cy="404.4" r="4.5" fill="#514c2b"/><ellipse cx="261.3" cy="405.3" rx="1.8" ry="3.3" fill="#ecece8" transform="rotate(32 261.3 405.3)"/><circle cx="304.2" cy="403.1" r="6.6" fill="#a09f9c"/><circle cx="304.2" cy="403.1" r="4.5" fill="#514c2b"/><ellipse cx="306" cy="404" rx="1.8" ry="3.3" fill="#ecece8" transform="rotate(32 306 404)"/><circle cx="814" cy="363.9" r="6.2" fill="#a09f9c"/><circle cx="814" cy="363.9" r="4.2" fill="#514c2b"/><ellipse cx="815.7" cy="364.8" rx="1.7" ry="3.1" fill="#ecece8" transform="rotate(32 815.7 364.8)"/><circle cx="849.1" cy="362.3" r="6.2" fill="#a09f9c"/><circle cx="849.1" cy="362.3" r="4.2" fill="#514c2b"/><ellipse cx="850.8" cy="363.2" rx="1.7" ry="3.1" fill="#ecece8" transform="rotate(32 850.8 363.2)"/><circle cx="803.1" cy="383.6" r="8" fill="#a09f9c"/><circle cx="803.1" cy="383.6" r="5.4" fill="#514c2b"/><ellipse cx="805.3" cy="384.7" rx="2.2" ry="4" fill="#ecece8" transform="rotate(32 805.3 384.7)"/><circle cx="857.8" cy="382.3" r="8" fill="#a09f9c"/><circle cx="857.8" cy="382.3" r="5.4" fill="#514c2b"/><ellipse cx="860" cy="383.4" rx="2.2" ry="4" fill="#ecece8" transform="rotate(32 860 383.4)"/><path d="M256.8 416.5l.8-6M261.3 372 258 404M261.3 372l49.7-2.4-3 30M306.2 410l-.4 6.5" fill="none" stroke="#fff" stroke-width="1.3"/><path d="M801.2 396.4l1-5M802.5 375V345.8l59.9-.5V372M861.6 391v5.4" fill="none" stroke="#fff" stroke-width="1.3"/><circle cx="170.3" cy="421.8" r="7.2" fill="none" stroke="#fff" stroke-width="1.1" stroke-dasharray="5 2"/><circle cx="170.3" cy="421.8" r="4.6" fill="#6c6a38" stroke="#9a9a8a" stroke-width=".8"/><circle cx="1020" cy="695" r="7.4" fill="none" stroke="#fff" stroke-width="1.3" stroke-dasharray="6 2"/><circle cx="1020" cy="695" r="4.4" fill="#7a7748" stroke="#aaa" stroke-width=".8"/><path d="M528.4 417h23.2v23.6h-23.2zM528.4 428.6h23.2" fill="none" stroke="#fff" stroke-width="1.3"/><rect x="532" y="420" width="16" height="6.5" fill="#d9d9d9"/><rect x="536.8" y="420" width="6.4" height="3.6" fill="#4a4a4a"/><rect x="532" y="431.5" width="16" height="6.5" fill="#a9a9a9"/><rect x="535.5" y="431.5" width="9" height="6.5" fill="#2c2c2c"/><circle cx="533.6" cy="420.6" r="1.4" fill="#f318e0"/><circle cx="545.6" cy="420.6" r="1.4" fill="#f318e0"/><text x="541.4" y="414.6" text-anchor="middle" textLength="9" lengthAdjust="spacingAndGlyphs" font-size="9.3" font-weight="bold" fill="#fff" font-family="Liberation Sans,sans-serif">D4</text><text x="541" y="449.6" text-anchor="middle" textLength="9" lengthAdjust="spacingAndGlyphs" font-size="9.3" font-weight="bold" fill="#fff" font-family="Liberation Sans,sans-serif">R4</text><path d="M525.6 420v5M553.6 422.6h4M555.6 420.6v4" stroke="#fff" stroke-width="1.1"/><path d="M495.5 449.8h23v22.4h-23zM507 449.8v22.4" fill="none" stroke="#fff" stroke-width="1.3"/><rect x="498" y="453" width="6.6" height="16" fill="#e0e0e0"/><rect x="509.6" y="453" width="6.4" height="16" fill="#a9a9a9"/><rect x="509.6" y="456.5" width="6.4" height="9" fill="#2c2c2c"/><circle cx="498.4" cy="453.8" r="1.4" fill="#f318e0"/><circle cx="498.6" cy="466.6" r="1.4" fill="#f318e0"/><text x="489.4" y="465" transform="rotate(-90 489.4 465)" text-anchor="middle" textLength="9" lengthAdjust="spacingAndGlyphs" font-size="9.3" font-weight="bold" fill="#fff" font-family="Liberation Sans,sans-serif">D3</text><text x="526.6" y="461" transform="rotate(-90 526.6 461)" text-anchor="middle" textLength="9" lengthAdjust="spacingAndGlyphs" font-size="9.3" font-weight="bold" fill="#fff" font-family="Liberation Sans,sans-serif">R3</text><path d="M502.6 444.6v4.6M500.6 446.6l2-2 2 2M498.6 476.6h5" stroke="#fff" stroke-width="1.1" fill="none"/><path d="M555.3 447.7h24v23.6h-24zM567.4 447.7v23.6" fill="none" stroke="#fff" stroke-width="1.3"/><rect x="558" y="451" width="7" height="17" fill="#a9a9a9"/><rect x="558" y="454.7" width="7" height="9.5" fill="#2c2c2c"/><rect x="569.8" y="451" width="6.8" height="17" fill="#dcdcdc"/><rect x="569.8" y="455" width="3" height="8" fill="#555"/><circle cx="571" cy="448.8" r="1.4" fill="#f318e0"/><circle cx="571.6" cy="464.6" r="1.4" fill="#f318e0"/><text x="551.4" y="459.6" transform="rotate(-90 551.4 459.6)" text-anchor="middle" textLength="9" lengthAdjust="spacingAndGlyphs" font-size="9.3" font-weight="bold" fill="#fff" font-family="Liberation Sans,sans-serif">R2</text><text x="586.6" y="458.6" transform="rotate(-90 586.6 458.6)" text-anchor="middle" textLength="9" lengthAdjust="spacingAndGlyphs" font-size="9.3" font-weight="bold" fill="#fff" font-family="Liberation Sans,sans-serif">D2</text><path d="M572.6 442.6v4M570.6 444.6h4M569.6 474.6h5" stroke="#fff" stroke-width="1.1"/><path d="M523.5 479.3h23.2v23.7h-23.2zM523.5 491h23.2" fill="none" stroke="#fff" stroke-width="1.3"/><rect x="527" y="482.4" width="16.4" height="6.2" fill="#a9a9a9"/><rect x="530.6" y="482.4" width="9.2" height="6.2" fill="#2c2c2c"/><rect x="527" y="494.4" width="16.4" height="6.2" fill="#d9d9d9"/><rect x="531.9" y="494.4" width="6.6" height="3.4" fill="#4a4a4a"/><circle cx="539" cy="494.6" r="1.4" fill="#f318e0"/><text x="535.8" y="478" text-anchor="middle" textLength="9" lengthAdjust="spacingAndGlyphs" font-size="9.3" font-weight="bold" fill="#fff" font-family="Liberation Sans,sans-serif">R1</text><text x="533" y="511.6" text-anchor="middle" textLength="9" lengthAdjust="spacingAndGlyphs" font-size="9.3" font-weight="bold" fill="#fff" font-family="Liberation Sans,sans-serif">D1</text><path d="M520.6 494.6v5M548.6 496.6h4M550.6 494.6v4" stroke="#fff" stroke-width="1.1"/><path d="M606.6 473.6l11-.2-.8 18.8-11 .2z" fill="none" stroke="#fff" stroke-width="1.3"/><rect x="608.6" y="476.6" width="6.4" height="13" fill="#a5a5a5"/><rect x="608.6" y="479.4" width="6.4" height="5" fill="#2c2c2c"/><text x="612.4" y="470.4" text-anchor="middle" textLength="9" lengthAdjust="spacingAndGlyphs" font-size="9.3" font-weight="bold" fill="#fff" font-family="Liberation Sans,sans-serif">R6</text><path d="M347.4 502.8h17v21.8h-18zM346.8 513.6h17.6" fill="none" stroke="#fff" stroke-width="1.3"/><rect x="350" y="505.4" width="11" height="5.6" fill="#c9c9c9"/><rect x="353.4" y="505.4" width="4.2" height="5.6" fill="#a3702a"/><rect x="349.6" y="516.2" width="11" height="5.6" fill="#c9c9c9"/><rect x="353" y="516.2" width="4.2" height="5.6" fill="#a3702a"/><text x="340.6" y="511.4" text-anchor="middle" textLength="8.9" lengthAdjust="spacingAndGlyphs" font-size="9.2" font-weight="bold" fill="#fff" font-family="Liberation Sans,sans-serif">C1</text><text x="340" y="522.4" text-anchor="middle" textLength="8.9" lengthAdjust="spacingAndGlyphs" font-size="9.2" font-weight="bold" fill="#fff" font-family="Liberation Sans,sans-serif">C2</text><polygon points="137.6,635.8 147.6,635.8 145.4,653.4 135.6,653.4" fill="none" stroke="#fff" stroke-width="1.3"/><polygon points="139.3,638.6 145,638.6 143.7,650.6 138.2,650.6" fill="#c4c4c4"/><polygon points="139,642.2 144.6,642.2 144.1,646.5 138.6,646.5" fill="#a06a22"/><text x="143.2" y="633" text-anchor="middle" textLength="7.8" lengthAdjust="spacingAndGlyphs" font-size="8" font-weight="bold" fill="#fff" font-family="Liberation Sans,sans-serif">C4</text><polygon points="97.4,653.6 107.4,653.6 105.2,670.8 95.3,670.8" fill="none" stroke="#fff" stroke-width="1.3"/><polygon points="99.1,656.4 104.7,656.4 103.5,668 98,668" fill="#c4c4c4"/><polygon points="98.8,659.9 104.4,659.9 103.9,664.1 98.4,664.1" fill="#a06a22"/><text x="100" y="680.4" text-anchor="middle" textLength="7.3" lengthAdjust="spacingAndGlyphs" font-size="7.5" font-weight="bold" fill="#fff" font-family="Liberation Sans,sans-serif">C3</text><polygon points="1008,641.4 1021.6,641.4 1022,661.8 1008.2,661.8" fill="none" stroke="#fff" stroke-width="1.3"/><polygon points="1011.1,644.7 1018.7,644.7 1018.9,658.5 1011.1,658.5" fill="#c4c4c4"/><polygon points="1011.1,648.8 1018.7,648.8 1018.8,653.8 1011.1,653.8" fill="#a06a22"/><text x="1015.6" y="639" text-anchor="middle" textLength="9.7" lengthAdjust="spacingAndGlyphs" font-size="10" font-weight="bold" fill="#fff" font-family="Liberation Sans,sans-serif">C6</text><polygon points="956.2,662 969.2,662 969.4,682.4 956.2,682.4" fill="none" stroke="#fff" stroke-width="1.3"/><polygon points="959.1,665.3 966.3,665.3 966.5,679.1 959.1,679.1" fill="#c4c4c4"/><polygon points="959.1,669.4 966.4,669.4 966.4,674.4 959.1,674.4" fill="#a06a22"/><text x="962.6" y="690" transform="rotate(-90 962.6 690)" text-anchor="middle" textLength="9.7" lengthAdjust="spacingAndGlyphs" font-size="10" font-weight="bold" fill="#fff" font-family="Liberation Sans,sans-serif">C5</text><rect x="201.2" y="615.7" width="3" height="1.8" fill="#8d8d8d"/><rect x="173.7" y="642.5" width="1.8" height="3" fill="#8d8d8d"/><rect x="200.8" y="620.3" width="3" height="1.8" fill="#8d8d8d"/><rect x="178" y="642.5" width="1.8" height="3" fill="#8d8d8d"/><rect x="200.5" y="624.8" width="3" height="1.8" fill="#8d8d8d"/><rect x="182.3" y="642.5" width="1.8" height="3" fill="#8d8d8d"/><rect x="200.1" y="629.4" width="3" height="1.8" fill="#8d8d8d"/><rect x="186.7" y="642.5" width="1.8" height="3" fill="#8d8d8d"/><rect x="199.8" y="633.9" width="3" height="1.8" fill="#8d8d8d"/><rect x="191" y="642.5" width="1.8" height="3" fill="#8d8d8d"/><rect x="199.4" y="638.5" width="3" height="1.8" fill="#8d8d8d"/><rect x="195.3" y="642.5" width="1.8" height="3" fill="#8d8d8d"/><polygon points="175.6,613 202,613 199.6,643 171.2,643" fill="#1c1c1d"/><path d="M178.3 611.2H173.8V615.7M199.3 611.2H203.8V615.7M196.9 644.8H201.4V640.3M173.9 644.8H169.4V640.3" fill="none" stroke="#fff" stroke-width="1.4"/><circle cx="170.6" cy="618" r="2.6" fill="#f318e0"/><text x="185.4" y="658" text-anchor="middle" textLength="11.6" lengthAdjust="spacingAndGlyphs" font-size="12" font-weight="bold" fill="#fff" font-family="Liberation Sans,sans-serif">U6</text><polygon points="111,643.6 131,643.6 129.4,661.8 108.6,661.8" fill="#39393b"/><path d="M113.7 641.8H109.2V646.3M128.3 641.8H132.8V646.3M126.7 663.6H131.2V659.1M111.3 663.6H106.8V659.1" fill="none" stroke="#fff" stroke-width="1.4"/><rect x="130" y="646" width="3.4" height="14" fill="#1d1d1d"/><circle cx="133.6" cy="661.4" r="2" fill="#f318e0"/><circle cx="137" cy="660.6" r="1.4" fill="#fff"/><text x="119.4" y="678" text-anchor="middle" textLength="16" lengthAdjust="spacingAndGlyphs" font-size="11" font-weight="bold" fill="#fff" font-family="Liberation Sans,sans-serif">U10</text><rect x="922.3" y="617.9" width="3" height="1.8" fill="#8d8d8d"/><rect x="889.6" y="648.7" width="1.8" height="3" fill="#8d8d8d"/><rect x="922.3" y="623.1" width="3" height="1.8" fill="#8d8d8d"/><rect x="895.1" y="648.7" width="1.8" height="3" fill="#8d8d8d"/><rect x="922.3" y="628.4" width="3" height="1.8" fill="#8d8d8d"/><rect x="900.7" y="648.7" width="1.8" height="3" fill="#8d8d8d"/><rect x="922.3" y="633.6" width="3" height="1.8" fill="#8d8d8d"/><rect x="906.3" y="648.7" width="1.8" height="3" fill="#8d8d8d"/><rect x="922.3" y="638.9" width="3" height="1.8" fill="#8d8d8d"/><rect x="911.9" y="648.7" width="1.8" height="3" fill="#8d8d8d"/><rect x="922.3" y="644.1" width="3" height="1.8" fill="#8d8d8d"/><rect x="917.4" y="648.7" width="1.8" height="3" fill="#8d8d8d"/><polygon points="886,614.6 922.8,614.6 922.8,649.2 886,649.2" fill="#1c1c1d"/><path d="M888.7 612.8H884.2V617.3M920.1 612.8H924.6V617.3M920.1 651H924.6V646.5M888.7 651H884.2V646.5" fill="none" stroke="#fff" stroke-width="1.4"/><circle cx="883.4" cy="620.2" r="2.6" fill="#f318e0"/><circle cx="880.8" cy="622.6" r="1.3" fill="#fff"/><text x="903.8" y="665.6" text-anchor="middle" textLength="12.6" lengthAdjust="spacingAndGlyphs" font-size="13" font-weight="bold" fill="#fff" font-family="Liberation Sans,sans-serif">U8</text><polygon points="973.6,650 1002,650 1002,673 973.6,673" fill="#39393b"/><path d="M976.3 648.2H971.8V652.7M999.3 648.2H1003.8V652.7M999.3 674.8H1003.8V670.3M976.3 674.8H971.8V670.3" fill="none" stroke="#fff" stroke-width="1.4"/><rect x="1001" y="652" width="3" height="19" fill="#222"/><circle cx="1005.2" cy="669" r="2.2" fill="#f318e0"/><circle cx="1008.6" cy="668.6" r="1.4" fill="#fff"/><text x="988.2" y="691.6" text-anchor="middle" textLength="19.6" lengthAdjust="spacingAndGlyphs" font-size="13.5" font-weight="bold" fill="#fff" font-family="Liberation Sans,sans-serif">U12</text><path d="M942.2 417v49M880.5 461v6" stroke="#fff" stroke-width="1.6"/><rect x="885.1" y="460" width="10.8" height="8.4" fill="#8f8f8f"/><rect x="905" y="460" width="11.4" height="8.4" fill="#8f8f8f"/><rect x="926.1" y="460" width="10.8" height="8.4" fill="#8f8f8f"/><polygon points="878.8,418.8 940.3,417.1 943.1,421.1 941.4,458.1 877.1,459.2" fill="#3a3836"/><polygon points="940.3,417.1 943.1,421.1 941.4,458.1 938.6,458.2" fill="#222"/><polygon points="884.5,430.2 891.9,430.2 889,445 890.8,459.6 883.3,459.6 881.1,445" fill="#c39a22"/><polygon points="884.5,430.2 887.1,430.2 883.7,445 885.9,459.6 883.3,459.6 881.1,445" fill="#e0bb44" opacity=".8"/><polygon points="905,430.2 913,430.2 910.1,445 911.8,459.6 904.4,459.6 902.1,445" fill="#c39a22"/><polygon points="905,430.2 907.6,430.2 904.7,445 907.0,459.6 904.4,459.6 902.1,445" fill="#e0bb44" opacity=".8"/><polygon points="926.1,430.2 932.9,430.2 930.6,445 932.3,459.6 924.9,459.6 923.2,445" fill="#c39a22"/><polygon points="926.1,430.2 928.7,430.2 925.8000000000001,445 927.5,459.6 924.9,459.6 923.2,445" fill="#e0bb44" opacity=".8"/><circle cx="926.2" cy="448.8" r="2.2" fill="#f318e0"/><text x="910.6" y="483" text-anchor="middle" textLength="11.6" lengthAdjust="spacingAndGlyphs" font-size="12" font-weight="bold" fill="#fff" font-family="Liberation Sans,sans-serif">P2</text><path d="M495 384.6l10.4 1.2.6-8M578 383.4l11-1.4 1-40" fill="none" stroke="#fff" stroke-width="1.6"/><polygon points="514,365 519,365 525,375 525,396 518,396 518,378" fill="#86868c"/><polygon points="514,365 518,365 521.6,376 521.6,388 518,388 518,378" fill="#cfcfee"/><polygon points="528,365 533,365 539,375 539,396 532,396 532,378" fill="#86868c"/><polygon points="528,365 532,365 535.6,376 535.6,388 532,388 532,378" fill="#cfcfee"/><polygon points="542.3,365 547.3,365 553.6,375 553.6,396 546.3,396 546.3,378" fill="#86868c"/><polygon points="542.3,365 546.3,365 549.9,376 549.9,388 546.3,388 546.3,378" fill="#cfcfee"/><polygon points="556.5,365 561.5,365 568.2,375 568.2,396 560.5,396 560.5,378" fill="#86868c"/><polygon points="556.5,365 560.5,365 564.1,376 564.1,388 560.5,388 560.5,378" fill="#cfcfee"/><polygon points="493.7,360 507.6,360 507.6,385 499,383" fill="#8e8c8b"/><polygon points="487,359.9 573,356.4 574,364.6 490,367" fill="#6c6a69"/><polygon points="577.2,312.3 589.1,325.1 588.4,380.8 578.6,382.2 573.1,356.4" fill="#939190"/><polygon points="577.2,312.3 582,318 580.4,381.6 578.6,382.2 573.1,356.4" fill="#85838280"/><polygon points="490.2,316.4 577.2,312.3 573.1,356.4 486.7,359.9" fill="url(#gconn)"/><polygon points="490.2,316.4 577.2,312.3 577,314.6 490,318.8" fill="#d8d6d4"/><polygon points="490.2,316.4 495,316.2 492,359.7 486.7,359.9" fill="#b3b1af"/><polygon points="563,313 577.2,312.3 573.1,356.4 559.6,357" fill="#bab8b6"/><path d="M497 330.6l-1.8 27M566.4 327.6l-2.4 28" stroke="#6a6866" stroke-width="1.3"/><polygon points="486.7,359.9 573.1,356.4 573.3,359.4 487,362.6" fill="#d9d7d5"/><circle cx="497.2" cy="366.6" r="2.6" fill="#f318e0"/><text x="211.3" y="444.6" text-anchor="middle" textLength="11.6" lengthAdjust="spacingAndGlyphs" font-size="12.0" font-weight="bold" fill="#fff" font-family="Liberation Sans,sans-serif">S4</text><text x="183.7" y="473.4" text-anchor="middle" textLength="11.5" lengthAdjust="spacingAndGlyphs" font-size="11.9" font-weight="bold" fill="#fff" font-family="Liberation Sans,sans-serif">S3</text><text x="228.6" y="472.4" text-anchor="middle" textLength="5.8" lengthAdjust="spacingAndGlyphs" font-size="12.0" font-weight="bold" fill="#fff" font-family="Liberation Sans,sans-serif">S</text><text x="203.8" y="501.2" text-anchor="middle" textLength="11.6" lengthAdjust="spacingAndGlyphs" font-size="12.0" font-weight="bold" fill="#fff" font-family="Liberation Sans,sans-serif">S1</text><text x="403.5" y="410.8" text-anchor="middle" textLength="11.9" lengthAdjust="spacingAndGlyphs" font-size="12.3" font-weight="bold" fill="#fff" font-family="Liberation Sans,sans-serif">S9</text><text x="394.7" y="496.4" text-anchor="middle" textLength="17.9" lengthAdjust="spacingAndGlyphs" font-size="12.3" font-weight="bold" fill="#fff" font-family="Liberation Sans,sans-serif">S11</text><text x="687.7" y="400.2" text-anchor="middle" textLength="18.5" lengthAdjust="spacingAndGlyphs" font-size="12.7" font-weight="bold" fill="#fff" font-family="Liberation Sans,sans-serif">S10</text><text x="682.3" y="491.2" text-anchor="middle" textLength="18.5" lengthAdjust="spacingAndGlyphs" font-size="12.7" font-weight="bold" fill="#fff" font-family="Liberation Sans,sans-serif">S12</text><text x="913.7" y="392.8" text-anchor="middle" textLength="12.7" lengthAdjust="spacingAndGlyphs" font-size="13.1" font-weight="bold" fill="#fff" font-family="Liberation Sans,sans-serif">S8</text><text x="857" y="456.4" text-anchor="middle" textLength="12.6" lengthAdjust="spacingAndGlyphs" font-size="13.0" font-weight="bold" fill="#fff" font-family="Liberation Sans,sans-serif">S7</text><text x="971.4" y="453.6" text-anchor="middle" textLength="12.8" lengthAdjust="spacingAndGlyphs" font-size="13.2" font-weight="bold" fill="#fff" font-family="Liberation Sans,sans-serif">S6</text><text x="908.7" y="517.4" text-anchor="middle" textLength="12.7" lengthAdjust="spacingAndGlyphs" font-size="13.1" font-weight="bold" fill="#fff" font-family="Liberation Sans,sans-serif">S5</text><text x="527" y="591.4" text-anchor="middle" textLength="18.2" lengthAdjust="spacingAndGlyphs" font-size="12.5" font-weight="bold" fill="#fff" font-family="Liberation Sans,sans-serif">S14</text><text x="280.9" y="416.6" text-anchor="middle" textLength="17.6" lengthAdjust="spacingAndGlyphs" font-size="12.1" font-weight="bold" fill="#fff" font-family="Liberation Sans,sans-serif">S15</text><text x="829.7" y="396.8" text-anchor="middle" textLength="18.8" lengthAdjust="spacingAndGlyphs" font-size="12.9" font-weight="bold" fill="#fff" font-family="Liberation Sans,sans-serif">S16</text><text x="355.6" y="648.8" text-anchor="middle" textLength="11.8" lengthAdjust="spacingAndGlyphs" font-size="12.2" font-weight="bold" fill="#fff" font-family="Liberation Sans,sans-serif">U2</text><text x="791" y="624" text-anchor="middle" textLength="12.5" lengthAdjust="spacingAndGlyphs" font-size="12.9" font-weight="bold" fill="#fff" font-family="Liberation Sans,sans-serif">U4</text><text x="168.4" y="436.4" text-anchor="middle" textLength="11.6" lengthAdjust="spacingAndGlyphs" font-size="8" font-weight="bold" fill="#fff" font-family="Liberation Sans,sans-serif">SMT</text><text x="1034" y="682" transform="rotate(-78 1034 682)" text-anchor="middle" textLength="13.8" lengthAdjust="spacingAndGlyphs" font-size="9.5" font-weight="bold" fill="#fff" font-family="Liberation Sans,sans-serif">SMT</text><polygon points="197,383.1 226.4,383.1 237.9,394.6 237.9,417.5 226.4,429 197,429 185.4,417.5 185.4,394.6" fill="none" stroke="#fff" stroke-width="1.1"/><rect x="205.9" y="425.5" width="13.4" height="8.4" fill="#979797"/><rect x="205.9" y="425.5" width="3.4" height="8.4" fill="#cfcfcf" opacity=".75"/><polygon points="195.8,381.9 225.2,381.9 236.7,393.4 236.7,416.3 225.2,427.8 195.8,427.8 184.2,416.3 184.2,393.4" fill="#222223"/><polygon points="182.3,384.8 189.4,377.7 216.9,377.7 224,384.8 236.7,393.4 236.7,416.3 225.2,427.8 195.8,427.8 184.2,416.3 182.3,413.7" fill="#262627"/><polygon points="216.9,377.7 224,384.8 236.7,393.4 236.7,416.3 225.2,427.8 216.9,420.8 224,413.7" fill="#1d1d1e"/><polygon points="183.9,384.7 189.3,379.3 217,379.3 222.4,384.7 222.4,413.8 217,419.2 189.3,419.2 183.9,413.8" fill="#323233" stroke="#323233" stroke-width="3.4" stroke-linejoin="round"/><clipPath id="c1823"><rect x="182.3" y="377.7" width="41.7" height="43.1" rx="6.8"/></clipPath><g clip-path="url(#c1823)"><circle cx="201.4" cy="396.1" r="18.4" fill="#19191a"/><circle cx="199.9" cy="394.6" r="18.4" fill="#3d3d3e"/><rect x="181.3" y="376.7" width="18.6" height="36.3" fill="#3d3d3e"/><rect x="181.3" y="376.7" width="37" height="17.9" fill="#3d3d3e"/><polygon points="183.9,384.7 189.3,379.3 217,379.3 222.4,384.7 222.4,413.8 217,419.2 189.3,419.2 183.9,413.8" fill="url(#gsh)"/></g><text x="196.2" y="396.7" transform="rotate(90 196.2 396.7)" text-anchor="middle" dominant-baseline="central" font-size="8" fill="#c4c4c4" font-family="Liberation Sans,sans-serif" letter-spacing=".5">SMD</text><polygon points="131.8,448.5 159.7,448.5 170.7,459.4 170.7,481 159.7,492 131.8,492 120.8,481 120.8,459.4" fill="none" stroke="#fff" stroke-width="1.1"/><rect x="166.5" y="463.3" width="10.5" height="12.1" fill="#979797"/><rect x="166.5" y="463.3" width="3.4" height="12.1" fill="#cfcfcf" opacity=".75"/><polygon points="130.6,447.3 158.5,447.3 169.5,458.2 169.5,479.8 158.5,490.8 130.6,490.8 119.6,479.8 119.6,458.2" fill="#222223"/><polygon points="117.8,449.8 124.6,443 150.9,443 157.7,449.8 169.5,458.2 169.5,479.8 158.5,490.8 130.6,490.8 119.6,479.8 117.8,476.9" fill="#262627"/><polygon points="150.9,443 157.7,449.8 169.5,458.2 169.5,479.8 158.5,490.8 150.9,483.7 157.7,476.9" fill="#1d1d1e"/><polygon points="119.4,449.8 124.6,444.6 150.9,444.6 156.1,449.8 156.1,476.9 150.9,482.1 124.6,482.1 119.4,476.9" fill="#323233" stroke="#323233" stroke-width="3.4" stroke-linejoin="round"/><clipPath id="c1178"><rect x="117.8" y="443" width="39.9" height="40.7" rx="6.5"/></clipPath><g clip-path="url(#c1178)"><circle cx="136.1" cy="460.4" r="17.6" fill="#19191a"/><circle cx="134.6" cy="458.9" r="17.6" fill="#3d3d3e"/><rect x="116.8" y="442" width="17.8" height="34.4" fill="#3d3d3e"/><rect x="116.8" y="442" width="35.3" height="16.9" fill="#3d3d3e"/><polygon points="119.4,449.8 124.6,444.6 150.9,444.6 156.1,449.8 156.1,476.9 150.9,482.1 124.6,482.1 119.4,476.9" fill="url(#gsh)"/></g><text x="130.6" y="460.9" transform="rotate(180 130.6 460.9)" text-anchor="middle" dominant-baseline="central" font-size="8" fill="#c4c4c4" font-family="Liberation Sans,sans-serif" letter-spacing=".5">SMD</text><polygon points="246.1,443.6 275.6,443.6 287.2,455.2 287.2,478.6 275.6,490.2 246.1,490.2 234.5,478.6 234.5,455.2" fill="none" stroke="#fff" stroke-width="1.1"/><rect x="280" y="459.3" width="12.4" height="13.4" fill="#979797"/><rect x="280" y="459.3" width="3.4" height="13.4" fill="#cfcfcf" opacity=".75"/><polygon points="244.9,442.4 274.4,442.4 286,454 286,477.4 274.4,489 244.9,489 233.3,477.4 233.3,454" fill="#222223"/><polygon points="231.6,445.8 238.9,438.5 267.4,438.5 274.7,445.8 286,454 286,477.4 274.4,489 244.9,489 233.3,477.4 231.6,475.1" fill="#262627"/><polygon points="267.4,438.5 274.7,445.8 286,454 286,477.4 274.4,489 267.4,482.5 274.7,475.1" fill="#1d1d1e"/><polygon points="233.2,445.7 238.8,440.1 267.5,440.1 273.1,445.7 273.1,475.3 267.5,480.9 238.8,480.9 233.2,475.3" fill="#323233" stroke="#323233" stroke-width="3.4" stroke-linejoin="round"/><clipPath id="c2316"><rect x="231.6" y="438.5" width="43.1" height="44" rx="7"/></clipPath><g clip-path="url(#c2316)"><circle cx="251.4" cy="457.3" r="19.1" fill="#19191a"/><circle cx="249.9" cy="455.8" r="19.1" fill="#3d3d3e"/><rect x="230.6" y="437.5" width="19.3" height="37.5" fill="#3d3d3e"/><rect x="230.6" y="437.5" width="38.4" height="18.3" fill="#3d3d3e"/><polygon points="233.2,445.7 238.8,440.1 267.5,440.1 273.1,445.7 273.1,475.3 267.5,480.9 238.8,480.9 233.2,475.3" fill="url(#gsh)"/></g><text x="246.4" y="457.8" transform="rotate(180 246.4 457.8)" text-anchor="middle" dominant-baseline="central" font-size="8" fill="#c4c4c4" font-family="Liberation Sans,sans-serif" letter-spacing=".5">SMD</text><polygon points="181.1,509.9 210.6,509.9 222.2,521.5 222.2,543.3 210.6,554.9 181.1,554.9 169.5,543.3 169.5,521.5" fill="none" stroke="#fff" stroke-width="1.1"/><rect x="190.4" y="551" width="13.6" height="8.1" fill="#979797"/><rect x="190.4" y="551" width="3.4" height="8.1" fill="#cfcfcf" opacity=".75"/><polygon points="179.9,508.7 209.4,508.7 221,520.3 221,542.1 209.4,553.7 179.9,553.7 168.3,542.1 168.3,520.3" fill="#222223"/><polygon points="166.3,511.3 173.3,504.3 200.6,504.3 207.6,511.3 221,520.3 221,542.1 209.4,553.7 179.9,553.7 168.3,542.1 166.3,539.4" fill="#262627"/><polygon points="200.6,504.3 207.6,511.3 221,520.3 221,542.1 209.4,553.7 200.6,546.4 207.6,539.4" fill="#1d1d1e"/><polygon points="167.9,511.3 173.3,505.9 200.6,505.9 206,511.3 206,539.5 200.6,544.8 173.3,544.8 167.9,539.5" fill="#323233" stroke="#323233" stroke-width="3.4" stroke-linejoin="round"/><clipPath id="c1663"><rect x="166.3" y="504.3" width="41.3" height="42.1" rx="6.7"/></clipPath><g clip-path="url(#c1663)"><circle cx="185.2" cy="522.3" r="18.2" fill="#19191a"/><circle cx="183.7" cy="520.8" r="18.2" fill="#3d3d3e"/><rect x="165.3" y="503.3" width="18.4" height="35.7" fill="#3d3d3e"/><rect x="165.3" y="503.3" width="36.7" height="17.5" fill="#3d3d3e"/><polygon points="167.9,511.3 173.3,505.9 200.6,505.9 206,511.3 206,539.5 200.6,544.8 173.3,544.8 167.9,539.5" fill="url(#gsh)"/></g><text x="179.9" y="522.8" transform="rotate(-80 179.9 522.8)" text-anchor="middle" dominant-baseline="central" font-size="8" fill="#c4c4c4" font-family="Liberation Sans,sans-serif" letter-spacing=".5">SMD</text><polygon points="388.8,354.1 418.2,354.1 429.7,365.7 429.7,389.3 418.2,400.8 388.8,400.8 377.2,389.3 377.2,365.7" fill="none" stroke="#fff" stroke-width="1.1"/><rect x="423" y="369.9" width="11.2" height="13.3" fill="#979797"/><rect x="423" y="369.9" width="3.4" height="13.3" fill="#cfcfcf" opacity=".75"/><polygon points="387.6,352.9 417,352.9 428.5,364.5 428.5,388.1 417,399.6 387.6,399.6 376,388.1 376,364.5" fill="#222223"/><polygon points="374.3,355.7 381.6,348.4 409.8,348.4 417.1,355.7 428.5,364.5 428.5,388.1 417,399.6 387.6,399.6 376,388.1 374.3,384.8" fill="#262627"/><polygon points="409.8,348.4 417.1,355.7 428.5,364.5 428.5,388.1 417,399.6 409.8,392.1 417.1,384.8" fill="#1d1d1e"/><polygon points="375.9,355.6 381.5,350 409.9,350 415.5,355.6 415.5,384.9 409.9,390.5 381.5,390.5 375.9,384.9" fill="#323233" stroke="#323233" stroke-width="3.4" stroke-linejoin="round"/><clipPath id="c3743"><rect x="374.3" y="348.4" width="42.8" height="43.7" rx="7"/></clipPath><g clip-path="url(#c3743)"><circle cx="394.2" cy="367.3" r="19.2" fill="#19191a"/><circle cx="392.7" cy="365.8" r="19.2" fill="#3d3d3e"/><rect x="373.3" y="347.4" width="19.4" height="37.6" fill="#3d3d3e"/><rect x="373.3" y="347.4" width="38.6" height="18.4" fill="#3d3d3e"/><polygon points="375.9,355.6 381.5,350 409.9,350 415.5,355.6 415.5,384.9 409.9,390.5 381.5,390.5 375.9,384.9" fill="url(#gsh)"/></g><text x="390.1" y="367.6" transform="rotate(180 390.1 367.6)" text-anchor="middle" dominant-baseline="central" font-size="8" fill="#c4c4c4" font-family="Liberation Sans,sans-serif" letter-spacing=".5">SMD</text><polygon points="379.9,440.4 409.6,440.4 421.3,452 421.3,475.5 409.6,487.2 379.9,487.2 368.2,475.5 368.2,452" fill="none" stroke="#fff" stroke-width="1.1"/><rect x="414" y="456.6" width="12.3" height="13.4" fill="#979797"/><rect x="414" y="456.6" width="3.4" height="13.4" fill="#cfcfcf" opacity=".75"/><polygon points="378.7,439.2 408.4,439.2 420.1,450.8 420.1,474.3 408.4,486 378.7,486 367,474.3 367,450.8" fill="#222223"/><polygon points="365.2,442.5 372.5,435.2 400.7,435.2 408,442.5 420.1,450.8 420.1,474.3 408.4,486 378.7,486 367,474.3 365.2,472.1" fill="#262627"/><polygon points="400.7,435.2 408,442.5 420.1,450.8 420.1,474.3 408.4,486 400.7,479.4 408,472.1" fill="#1d1d1e"/><polygon points="366.8,442.4 372.4,436.8 400.8,436.8 406.4,442.4 406.4,472.2 400.8,477.8 372.4,477.8 366.8,472.2" fill="#323233" stroke="#323233" stroke-width="3.4" stroke-linejoin="round"/><clipPath id="c3652"><rect x="365.2" y="435.2" width="42.8" height="44.2" rx="7"/></clipPath><g clip-path="url(#c3652)"><circle cx="385" cy="454.3" r="19.2" fill="#19191a"/><circle cx="383.5" cy="452.8" r="19.2" fill="#3d3d3e"/><rect x="364.2" y="434.2" width="19.3" height="37.8" fill="#3d3d3e"/><rect x="364.2" y="434.2" width="38.5" height="18.6" fill="#3d3d3e"/><polygon points="366.8,442.4 372.4,436.8 400.8,436.8 406.4,442.4 406.4,472.2 400.8,477.8 372.4,477.8 366.8,472.2" fill="url(#gsh)"/></g><text x="381" y="454.6" transform="rotate(180 381 454.6)" text-anchor="middle" dominant-baseline="central" font-size="8" fill="#c4c4c4" font-family="Liberation Sans,sans-serif" letter-spacing=".5">SMD</text><polygon points="672.9,340.8 702.8,340.8 714.6,352.6 714.6,377.8 702.8,389.6 672.9,389.6 661.2,377.8 661.2,352.6" fill="none" stroke="#fff" stroke-width="1.1"/><rect x="709" y="356.8" width="11.5" height="15.2" fill="#979797"/><rect x="709" y="356.8" width="3.4" height="15.2" fill="#cfcfcf" opacity=".75"/><polygon points="671.7,339.6 701.6,339.6 713.4,351.4 713.4,376.6 701.6,388.4 671.7,388.4 660,376.6 660,351.4" fill="#222223"/><polygon points="658.4,342.1 666,334.5 695.3,334.5 702.9,342.1 713.4,351.4 713.4,376.6 701.6,388.4 671.7,388.4 660,376.6 658.4,372.3" fill="#262627"/><polygon points="695.3,334.5 702.9,342.1 713.4,351.4 713.4,376.6 701.6,388.4 695.3,379.9 702.9,372.3" fill="#1d1d1e"/><polygon points="660,341.9 665.8,336.1 695.5,336.1 701.3,341.9 701.3,372.5 695.5,378.3 665.8,378.3 660,372.5" fill="#323233" stroke="#323233" stroke-width="3.4" stroke-linejoin="round"/><clipPath id="c6584"><rect x="658.4" y="334.5" width="44.5" height="45.4" rx="7.2"/></clipPath><g clip-path="url(#c6584)"><circle cx="679.4" cy="354.5" r="20.4" fill="#19191a"/><circle cx="677.9" cy="353" r="20.4" fill="#3d3d3e"/><rect x="657.4" y="333.5" width="20.5" height="40" fill="#3d3d3e"/><rect x="657.4" y="333.5" width="40.9" height="19.5" fill="#3d3d3e"/><polygon points="660,341.9 665.8,336.1 695.5,336.1 701.3,341.9 701.3,372.5 695.5,378.3 665.8,378.3 660,372.5" fill="url(#gsh)"/></g><text x="677.3" y="354.5" transform="rotate(0 677.3 354.5)" text-anchor="middle" dominant-baseline="central" font-size="8" fill="#c4c4c4" font-family="Liberation Sans,sans-serif" letter-spacing=".5">SMD</text><polygon points="667,431.3 696.9,431.3 708.7,443.1 708.7,468.7 696.9,480.5 667,480.5 655.3,468.7 655.3,443.1" fill="none" stroke="#fff" stroke-width="1.1"/><rect x="703.5" y="448.1" width="11.5" height="14" fill="#979797"/><rect x="703.5" y="448.1" width="3.4" height="14" fill="#cfcfcf" opacity=".75"/><polygon points="665.8,430.1 695.7,430.1 707.5,441.9 707.5,467.5 695.7,479.3 665.8,479.3 654.1,467.5 654.1,441.9" fill="#222223"/><polygon points="652.6,433.2 660.3,425.5 690.1,425.5 697.8,433.2 707.5,441.9 707.5,467.5 695.7,479.3 665.8,479.3 654.1,467.5 652.6,463.9" fill="#262627"/><polygon points="690.1,425.5 697.8,433.2 707.5,441.9 707.5,467.5 695.7,479.3 690.1,471.6 697.8,463.9" fill="#1d1d1e"/><polygon points="654.2,433 660.1,427.1 690.3,427.1 696.2,433 696.2,464.1 690.3,470 660.1,470 654.2,464.1" fill="#323233" stroke="#323233" stroke-width="3.4" stroke-linejoin="round"/><clipPath id="c6526"><rect x="652.6" y="425.5" width="45.2" height="46.1" rx="7.3"/></clipPath><g clip-path="url(#c6526)"><circle cx="673.9" cy="445.8" r="20.7" fill="#19191a"/><circle cx="672.4" cy="444.3" r="20.7" fill="#3d3d3e"/><rect x="651.6" y="424.5" width="20.8" height="40.6" fill="#3d3d3e"/><rect x="651.6" y="424.5" width="41.5" height="19.8" fill="#3d3d3e"/><polygon points="654.2,433 660.1,427.1 690.3,427.1 696.2,433 696.2,464.1 690.3,470 660.1,470 654.2,464.1" fill="url(#gsh)"/></g><text x="671.8" y="445.8" transform="rotate(0 671.8 445.8)" text-anchor="middle" dominant-baseline="central" font-size="8" fill="#c4c4c4" font-family="Liberation Sans,sans-serif" letter-spacing=".5">SMD</text><polygon points="899.1,330.4 929.5,330.4 941.5,342.4 941.5,369.1 929.5,381.1 899.1,381.1 887.1,369.1 887.1,342.4" fill="none" stroke="#fff" stroke-width="1.1"/><rect x="936.5" y="349" width="12.8" height="13.3" fill="#979797"/><rect x="936.5" y="349" width="3.4" height="13.3" fill="#cfcfcf" opacity=".75"/><polygon points="897.9,329.2 928.3,329.2 940.3,341.2 940.3,367.9 928.3,379.9 897.9,379.9 885.9,367.9 885.9,341.2" fill="#222223"/><polygon points="884.4,331 892.2,323.2 922.4,323.2 930.2,331 940.3,341.2 940.3,367.9 928.3,379.9 897.9,379.9 885.9,367.9 884.4,362.1" fill="#262627"/><polygon points="922.4,323.2 930.2,331 940.3,341.2 940.3,367.9 928.3,379.9 922.4,369.9 930.2,362.1" fill="#1d1d1e"/><polygon points="886,330.8 892,324.8 922.6,324.8 928.6,330.8 928.6,362.4 922.6,368.3 892,368.3 886,362.4" fill="#323233" stroke="#323233" stroke-width="3.4" stroke-linejoin="round"/><clipPath id="c8844"><rect x="884.4" y="323.2" width="45.8" height="46.7" rx="7.4"/></clipPath><g clip-path="url(#c8844)"><circle cx="906.3" cy="344.2" r="21.4" fill="#19191a"/><circle cx="904.8" cy="342.7" r="21.4" fill="#3d3d3e"/><rect x="883.4" y="322.2" width="21.4" height="41.8" fill="#3d3d3e"/><rect x="883.4" y="322.2" width="42.8" height="20.5" fill="#3d3d3e"/><polygon points="886,330.8 892,324.8 922.6,324.8 928.6,330.8 928.6,362.4 922.6,368.3 892,368.3 886,362.4" fill="url(#gsh)"/></g><text x="905.9" y="343.8" transform="rotate(0 905.9 343.8)" text-anchor="middle" dominant-baseline="central" font-size="8" fill="#c4c4c4" font-family="Liberation Sans,sans-serif" letter-spacing=".5">SMD</text><polygon points="799,428 829.1,428 841,439.9 841,466.2 829.1,478.1 799,478.1 787.1,466.2 787.1,439.9" fill="none" stroke="#fff" stroke-width="1.1"/><rect x="836" y="445.5" width="11.7" height="13.3" fill="#979797"/><rect x="836" y="445.5" width="3.4" height="13.3" fill="#cfcfcf" opacity=".75"/><polygon points="797.8,426.8 827.9,426.8 839.8,438.7 839.8,465 827.9,476.9 797.8,476.9 785.9,465 785.9,438.7" fill="#222223"/><polygon points="784.5,429.9 792.3,422.1 822.7,422.1 830.5,429.9 839.8,438.7 839.8,465 827.9,476.9 797.8,476.9 785.9,465 784.5,461.2" fill="#262627"/><polygon points="822.7,422.1 830.5,429.9 839.8,438.7 839.8,465 827.9,476.9 822.7,469 830.5,461.2" fill="#1d1d1e"/><polygon points="786.1,429.7 792.1,423.7 822.9,423.7 828.9,429.7 828.9,461.4 822.9,467.4 792.1,467.4 786.1,461.4" fill="#323233" stroke="#323233" stroke-width="3.4" stroke-linejoin="round"/><clipPath id="c7845"><rect x="784.5" y="422.1" width="46" height="46.9" rx="7.5"/></clipPath><g clip-path="url(#c7845)"><circle cx="806.4" cy="443" r="21.3" fill="#19191a"/><circle cx="804.9" cy="441.5" r="21.3" fill="#3d3d3e"/><rect x="783.5" y="421.1" width="21.4" height="41.7" fill="#3d3d3e"/><rect x="783.5" y="421.1" width="42.7" height="20.4" fill="#3d3d3e"/><polygon points="786.1,429.7 792.1,423.7 822.9,423.7 828.9,429.7 828.9,461.4 822.9,467.4 792.1,467.4 786.1,461.4" fill="url(#gsh)"/></g><text x="805.2" y="442.7" transform="rotate(0 805.2 442.7)" text-anchor="middle" dominant-baseline="central" font-size="8" fill="#c4c4c4" font-family="Liberation Sans,sans-serif" letter-spacing=".5">SMD</text><polygon points="995.3,422.6 1026.1,422.6 1038.2,434.7 1038.2,462.6 1026.1,474.7 995.3,474.7 983.2,462.6 983.2,434.7" fill="none" stroke="#fff" stroke-width="1.1"/><rect x="1002.5" y="470.3" width="15.9" height="9" fill="#979797"/><rect x="1002.5" y="470.3" width="3.4" height="9" fill="#cfcfcf" opacity=".75"/><polygon points="994.1,421.4 1024.9,421.4 1037,433.5 1037,461.4 1024.9,473.5 994.1,473.5 982,461.4 982,433.5" fill="#222223"/><polygon points="980.7,424.4 988.8,416.3 1020.4,416.3 1028.5,424.4 1037,433.5 1037,461.4 1024.9,473.5 994.1,473.5 982,461.4 980.7,456.9" fill="#262627"/><polygon points="1020.4,416.3 1028.5,424.4 1037,433.5 1037,461.4 1024.9,473.5 1020.4,465.1 1028.5,456.9" fill="#1d1d1e"/><polygon points="982.3,424.1 988.5,417.9 1020.7,417.9 1026.9,424.1 1026.9,457.2 1020.7,463.5 988.5,463.5 982.3,457.2" fill="#323233" stroke="#323233" stroke-width="3.4" stroke-linejoin="round"/><clipPath id="c9807"><rect x="980.7" y="416.3" width="47.8" height="48.8" rx="7.8"/></clipPath><g clip-path="url(#c9807)"><circle cx="1003.7" cy="438.3" r="22.5" fill="#19191a"/><circle cx="1002.2" cy="436.8" r="22.5" fill="#3d3d3e"/><rect x="979.7" y="415.3" width="22.5" height="43.9" fill="#3d3d3e"/><rect x="979.7" y="415.3" width="45" height="21.5" fill="#3d3d3e"/><polygon points="982.3,424.1 988.5,417.9 1020.7,417.9 1026.9,424.1 1026.9,457.2 1020.7,463.5 988.5,463.5 982.3,457.2" fill="url(#gsh)"/></g><text x="1003.2" y="437.8" transform="rotate(90 1003.2 437.8)" text-anchor="middle" dominant-baseline="central" font-size="8" fill="#c4c4c4" font-family="Liberation Sans,sans-serif" letter-spacing=".5">SMD</text><polygon points="890.5,520.4 922.2,520.4 934.6,532.8 934.6,560.5 922.2,572.9 890.5,572.9 878,560.5 878,532.8" fill="none" stroke="#fff" stroke-width="1.1"/><rect x="929.5" y="538.5" width="12.4" height="14.3" fill="#979797"/><rect x="929.5" y="538.5" width="3.4" height="14.3" fill="#cfcfcf" opacity=".75"/><polygon points="889.3,519.2 921,519.2 933.4,531.6 933.4,559.3 921,571.7 889.3,571.7 876.8,559.3 876.8,531.6" fill="#222223"/><polygon points="875.5,523.7 883.8,515.4 916.2,515.4 924.5,523.7 933.4,531.6 933.4,559.3 921,571.7 889.3,571.7 876.8,559.3 875.5,557" fill="#262627"/><polygon points="916.2,515.4 924.5,523.7 933.4,531.6 933.4,559.3 921,571.7 916.2,565.4 924.5,557" fill="#1d1d1e"/><polygon points="877.1,523.4 883.5,517 916.5,517 922.9,523.4 922.9,557.4 916.5,563.8 883.5,563.8 877.1,557.4" fill="#323233" stroke="#323233" stroke-width="3.4" stroke-linejoin="round"/><clipPath id="c8755"><rect x="875.5" y="515.4" width="49" height="50" rx="8"/></clipPath><g clip-path="url(#c8755)"><circle cx="898.9" cy="537.7" r="22.8" fill="#19191a"/><circle cx="897.4" cy="536.2" r="22.8" fill="#3d3d3e"/><rect x="874.5" y="514.4" width="22.9" height="44.6" fill="#3d3d3e"/><rect x="874.5" y="514.4" width="45.7" height="21.8" fill="#3d3d3e"/><polygon points="877.1,523.4 883.5,517 916.5,517 922.9,523.4 922.9,557.4 916.5,563.8 883.5,563.8 877.1,557.4" fill="url(#gsh)"/></g><text x="898.4" y="537.4" transform="rotate(0 898.4 537.4)" text-anchor="middle" dominant-baseline="central" font-size="8" fill="#c4c4c4" font-family="Liberation Sans,sans-serif" letter-spacing=".5">SMD</text><polygon points="505.8,595.5 536.2,595.5 548.2,607.4 548.2,632.1 536.2,644.1 505.8,644.1 493.8,632.1 493.8,607.4" fill="none" stroke="#fff" stroke-width="1.1"/><rect x="542" y="611.4" width="11.7" height="14.7" fill="#979797"/><rect x="542" y="611.4" width="3.4" height="14.7" fill="#cfcfcf" opacity=".75"/><polygon points="504.6,594.3 535,594.3 547,606.2 547,630.9 535,642.9 504.6,642.9 492.6,630.9 492.6,606.2" fill="#222223"/><polygon points="491,598.2 498.7,590.5 528.5,590.5 536.2,598.2 547,606.2 547,630.9 535,642.9 504.6,642.9 492.6,630.9 491,628.9" fill="#262627"/><polygon points="528.5,590.5 536.2,598.2 547,606.2 547,630.9 535,642.9 528.5,636.6 536.2,628.9" fill="#1d1d1e"/><polygon points="492.6,598 498.5,592.1 528.7,592.1 534.6,598 534.6,629.1 528.7,635 498.5,635 492.6,629.1" fill="#323233" stroke="#323233" stroke-width="3.4" stroke-linejoin="round"/><clipPath id="c4910"><rect x="491" y="590.5" width="45.2" height="46.1" rx="7.3"/></clipPath><g clip-path="url(#c4910)"><circle cx="512.1" cy="610.6" r="20.5" fill="#19191a"/><circle cx="510.6" cy="609.1" r="20.5" fill="#3d3d3e"/><rect x="490" y="589.5" width="20.6" height="40" fill="#3d3d3e"/><rect x="490" y="589.5" width="41" height="19.6" fill="#3d3d3e"/><polygon points="492.6,598 498.5,592.1 528.7,592.1 534.6,598 534.6,629.1 528.7,635 498.5,635 492.6,629.1" fill="url(#gsh)"/></g><text x="508.8" y="610.8" transform="rotate(180 508.8 610.8)" text-anchor="middle" dominant-baseline="central" font-size="8" fill="#c4c4c4" font-family="Liberation Sans,sans-serif" letter-spacing=".5">SMD</text><polygon points="477.8,655 563.6,655.6 562,688.6 477,687.6" fill="none" stroke="#fff" stroke-width="1.4"/><text x="520.4" y="670" text-anchor="middle" textLength="20.2" lengthAdjust="spacingAndGlyphs" font-size="13.5" font-weight="bold" fill="#fff" font-family="Liberation Sans,sans-serif">ILO</text><text x="519.4" y="685.6" text-anchor="middle" textLength="76" lengthAdjust="spacingAndGlyphs" font-size="12.5" font-weight="bold" fill="#fff" font-family="Liberation Sans,sans-serif">A b0.84.0 m8</text></svg>
<div class="abs" style="left:20px;top:20px;width:18px;height:18px;border:1.5px solid #3b8ad9;border-radius:2.5px;background:#fff"></div>
<div class="abs" style="left:46px;top:21px;font-size:15px;line-height:18px;color:#4a4a4a;white-space:nowrap;letter-spacing:-0.05px">Select all top parts</div>
<div class="abs" style="left:960px;top:16px;width:20px;height:20px;background:#a9a9a9;border-radius:1.5px"><svg width="20" height="20" viewBox="0 0 20 20"><path d="M3.6 13l6.4-6.2 6.4 6.2" fill="none" stroke="#fff" stroke-width="1.9"/></svg></div>
<div class="abs" style="left:960px;top:72px;width:20px;height:20px;background:#a9a9a9;border-radius:1.5px"><svg width="20" height="20" viewBox="0 0 20 20"><path d="M3.6 7l6.4 6.2 6.4-6.2" fill="none" stroke="#fff" stroke-width="1.9"/></svg></div>
<div class="abs" style="left:932px;top:44px;width:20px;height:20px;background:#a9a9a9;border-radius:1.5px"><svg width="20" height="20" viewBox="0 0 20 20"><path d="M13 3.6l-6.2 6.4 6.2 6.4" fill="none" stroke="#fff" stroke-width="1.9"/></svg></div>
<div class="abs" style="left:988px;top:44px;width:20px;height:20px;background:#a9a9a9;border-radius:1.5px"><svg width="20" height="20" viewBox="0 0 20 20"><path d="M7 3.6l6.2 6.4-6.2 6.4" fill="none" stroke="#fff" stroke-width="1.9"/></svg></div>
<div class="abs" style="left:149.5px;top:524.8px;font-family:'Liberation Serif',serif;font-size:14px;line-height:18px;color:#444;white-space:nowrap;letter-spacing:0px">* The preview for reference only. Check final part placement at DFM Analysis in Order History in 4-6 hours after placing the order.</div>
</div>
<div id="panel">
<div class="tab" style="left:0;font-size:17px;font-weight:bold;color:#333;letter-spacing:-.2px">Price</div>
<div class="tab" style="left:200px;font-size:15.5px;color:#bcbcbc;letter-spacing:-.5px">BOM</div>
<div class="abs" style="left:200px;top:39px;width:200px;height:1px;background:#ededed"></div>
<div class="abs" style="left:0;top:38.6px;width:200px;height:1.6px;background:#3a3a3a"></div>
<div class="row" style="top:76px"><b style="letter-spacing:-0.28px">PCB Price</b><svg class="chev" width="18" height="12" viewBox="0 0 18 12"><path d="M2 10.4l7.6-7.8 7.6 7.8" fill="none" stroke="#8a8a8a" stroke-width="1.3"/></svg></div>
<div class="row" style="top:111px"><span style="letter-spacing:-0.17px">Engineering fee</span><span class="p">$4.00</span></div>
<div class="row" style="top:146px"><span style="letter-spacing:-0.25px">Board</span><span class="p">$2.60</span></div>
<div class="abs" style="left:30px;top:181px;width:332px;height:1px;background:#ececec"></div>
<div class="row" style="top:197.39999999999998px"><b style="letter-spacing:0px">SMT Price</b><svg class="chev" width="18" height="12" viewBox="0 0 18 12"><path d="M2 10.4l7.6-7.8 7.6 7.8" fill="none" stroke="#8a8a8a" stroke-width="1.3"/></svg></div>
<div class="row" style="top:231.5px"><span style="letter-spacing:-0.16px">Setup fee</span><span class="p">$8.00</span></div>
<div class="row" style="top:266.5px"><span style="letter-spacing:-0.03px">Stencil</span><span class="p">$1.50</span></div>
<div class="row" style="top:301.5px"><span style="letter-spacing:-0.28px">Panel</span><span class="p">$0.00</span></div>
<div class="row" style="top:336.5px"><span style="letter-spacing:-0.24px">Large Size</span><span class="p">$0.00</span></div>
<div class="row" style="top:371.5px"><span style="letter-spacing:0px">Components</span><span class="p">$8.93</span></div>
<div class="row" style="top:406.5px"><span style="letter-spacing:-0.03px">Extended components fee</span><span style="display:inline-block;width:14px;height:14px;border-radius:50%;background:#d9d9d9;color:#fff;font-size:10.5px;line-height:14px;text-align:center;margin-left:4px;vertical-align:1px;font-weight:bold">?</span><span class="p">$15.00</span></div>
<div class="row" style="top:441.5px"><span style="letter-spacing:0px">SMT Assembly</span><span style="display:inline-block;width:14px;height:14px;border-radius:50%;background:#d9d9d9;color:#fff;font-size:10.5px;line-height:14px;text-align:center;margin-left:4px;vertical-align:1px;font-weight:bold">?</span><span class="p">$11.52</span></div>
<div class="abs" style="left:392px;top:41px;width:8px;height:238px;border-radius:4px;background:#9b9b9b"></div>
<div class="abs" style="left:0;top:447px;width:400px;height:153px;background:#fff;border-top:1px solid #e9e9e9"></div>
<div class="abs" style="left:40px;top:457px;width:320px;height:50px;border-radius:25px;background:#3689e6;color:#fff;font-size:18px;font-weight:bold;text-align:center;line-height:52px;letter-spacing:.33px">Save To Cart</div>
<div class="abs" style="left:30px;top:522px;width:340px;font-size:14px;line-height:24px;color:#9a9a9a;white-space:nowrap;letter-spacing:-0.083px">By placing your order, pls read <span style="text-decoration:underline">the Terms and</span><br><span style="text-decoration:underline;letter-spacing:-0.17px">Conditions of JLCPCB SMT Service.</span></div>
</div>
</body></html>
